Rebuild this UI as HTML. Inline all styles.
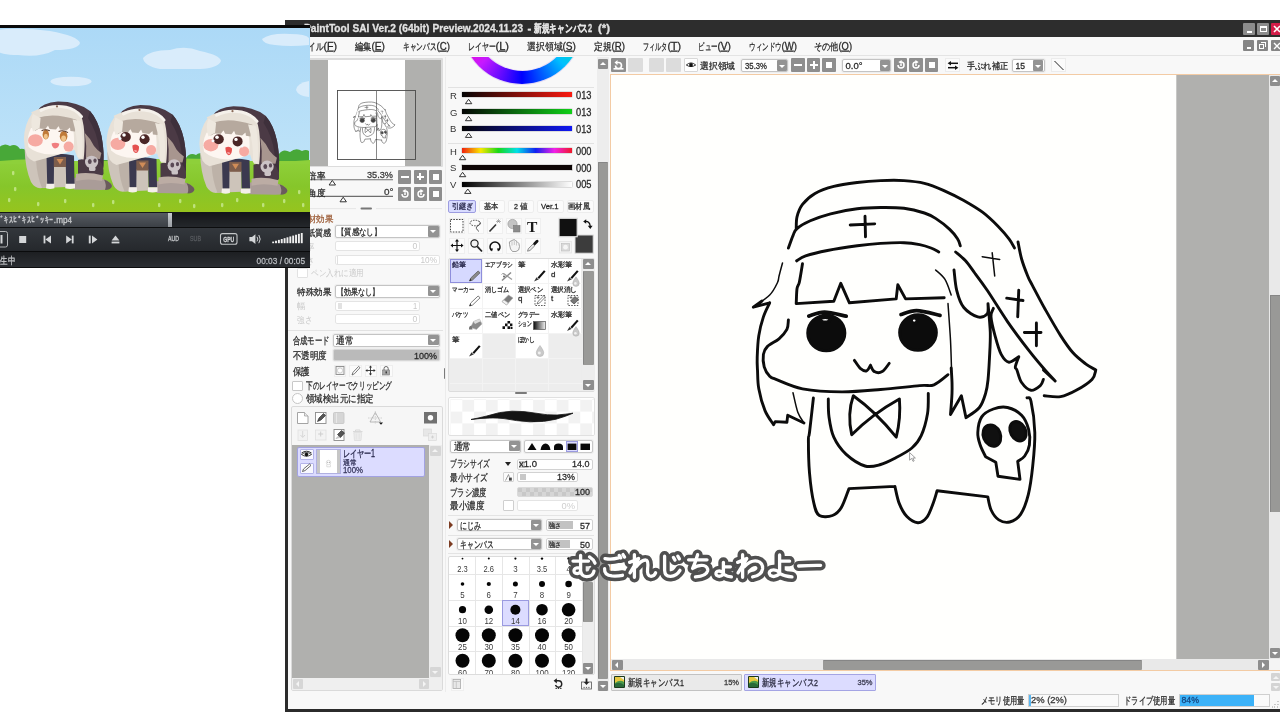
<!DOCTYPE html>
<html lang="ja">
<head>
<meta charset="utf-8">
<title>PaintTool SAI Ver.2</title>
<style>
*{box-sizing:border-box;margin:0;padding:0}
html,body{width:1280px;height:720px;overflow:hidden;background:#fff}
body{position:relative;font-family:"Liberation Sans",sans-serif;font-size:10px;color:#222;line-height:1}
.a{position:absolute}
svg{position:absolute;overflow:visible;will-change:transform}
svg text{font-family:"Liberation Sans",sans-serif}
.btn{position:absolute;background:#8e8e8e;border-radius:1px}
.btnl{position:absolute;background:#dcdcdc;border-radius:1px}
.combo{position:absolute;background:#fff;border:1px solid #c4c4c4;border-radius:2px;box-shadow:0 0 0 1px #eeeeee}
.dd{position:absolute;background:#939393;border-radius:1px}
.dd:after{content:"";position:absolute;left:50%;top:50%;margin:-1px 0 0 -3px;border:3px solid transparent;border-top:3px solid #fff;border-bottom:0}
.fld{position:absolute;background:#fff;border:1px solid #d2d2d2;border-radius:2px}
.fldd{position:absolute;background:#fff;border:1px solid #e4e4e4;border-radius:2px}
.hl{position:absolute;height:1px;background:#e0e0e0}
.ib{position:absolute;background:#fbfbfb;border:1px solid #ececec;border-radius:1px}
#win{position:absolute;left:285px;top:20px;width:995px;height:692px;background:#f8f8f8;border-left:3px solid #2b2b2b;border-bottom:3px solid #2b2b2b}
#title{position:absolute;left:285px;top:20px;width:995px;height:17px;background:#2d2d2d}
</style>
</head>
<body>
<!-- ================= SAI WINDOW FRAME ================= -->
<div id="win"></div>
<div id="title">
<div class="a" style="left:958px;top:3px;width:12px;height:12px;background:#8c8c8c;border-radius:1px"><div class="a" style="left:4px;top:8px;width:5px;height:2px;background:#fff"></div></div>
<div class="a" style="left:972px;top:3px;width:12px;height:12px;background:#8c8c8c;border-radius:1px"><div class="a" style="left:3px;top:3px;width:7px;height:6px;border:1px solid #fff;border-top:2px solid #fff"></div></div>
<div class="a" style="left:986px;top:3px;width:12px;height:12px;background:#d21c48;border-radius:1px"><svg style="left:2px;top:2px" width="8" height="8" viewBox="0 0 8 8"><path d="M1 1L7 7M7 1L1 7" stroke="#fff" stroke-width="1.6"/></svg></div>
</div>
<div class="a" style="left:288px;top:37px;width:992px;height:18px;background:#f8f8f8;"></div>
<div class="a" style="left:288px;top:55px;width:992px;height:1px;background:#e4e4e4;"></div>
<div class="a" style="left:1243px;top:40px;width:11px;height:11px;background:#858585;border-radius:1px"><div class="a" style="left:4px;top:7px;width:4px;height:2px;background:#fff"></div></div>
<div class="a" style="left:1257px;top:40px;width:11px;height:11px;background:#858585;border-radius:1px"><div class="a" style="left:2px;top:4px;width:5px;height:5px;border:1px solid #fff"></div><div class="a" style="left:4px;top:2px;width:5px;height:5px;border:1px solid #fff;border-left:0;border-bottom:0"></div></div>
<div class="a" style="left:1271px;top:40px;width:11px;height:11px;background:#858585;border-radius:1px"><svg style="left:2px;top:2px" width="8" height="8" viewBox="0 0 8 8"><path d="M1 1L7 7M7 1L1 7" stroke="#fff" stroke-width="1.4"/></svg></div>
<!-- ================= CANVAS AREA ================= -->
<div class="a" style="left:597px;top:58px;width:11px;height:10px;background:#8e8e8e;border-radius:1px"><div class="a" style="left:2px;top:3px;border:3px solid transparent;border-bottom:3px solid #fff;border-top:0"></div></div>
<div class="a" style="left:611px;top:58px;width:15px;height:14px;background:#8e8e8e;border-radius:1px"><svg style="left:2px;top:2px" width="11" height="10" viewBox="0 0 11 10"><path d="M2.5 5.5A3 3 0 1 0 5.5 2.5L3 2.5" fill="none" stroke="#fff" stroke-width="1.6"/><path d="M4.5 0L1.5 2.6L4.5 5.2Z" fill="#fff"/><rect x="0.5" y="8" width="10" height="1.6" fill="#fff"/></svg></div>
<div class="a" style="left:628px;top:58px;width:15px;height:14px;background:#dcdcdc;border-radius:1px"></div>
<div class="a" style="left:649px;top:58px;width:15px;height:14px;background:#dcdcdc;border-radius:1px"></div>
<div class="a" style="left:665.5px;top:58px;width:15px;height:14px;background:#dcdcdc;border-radius:1px"></div>
<div class="a" style="left:684px;top:58px;width:14px;height:14px;background:#fff;border:1px solid #d8d8d8;border-radius:1px"><svg style="left:1px;top:3px" width="10" height="6" viewBox="0 0 10 6"><path d="M0.3 3Q5 -1.2 9.7 3Q5 6.2 0.3 3Z" fill="#fff" stroke="#222" stroke-width="0.9"/><circle cx="5" cy="3" r="1.9" fill="#111"/></svg></div>
<div class="combo" style="left:741px;top:59px;width:47px;height:13px;"></div>
<div class="dd" style="left:777px;top:60px;width:10px;height:11px;"></div>
<div class="a" style="left:791px;top:58px;width:13.5px;height:14px;background:#8e8e8e;border-radius:1px"><div class="a" style="left:3px;top:6px;width:8px;height:2px;background:#fff"></div></div>
<div class="a" style="left:806.5px;top:58px;width:13.5px;height:14px;background:#8e8e8e;border-radius:1px"><div class="a" style="left:3px;top:6px;width:8px;height:2px;background:#fff"></div><div class="a" style="left:6px;top:3px;width:2px;height:8px;background:#fff"></div></div>
<div class="a" style="left:822px;top:58px;width:13.5px;height:14px;background:#8e8e8e;border-radius:1px"><div class="a" style="left:4px;top:4px;width:6px;height:6px;background:#fff"></div></div>
<div class="combo" style="left:842px;top:59px;width:49px;height:13px;"></div>
<div class="dd" style="left:880px;top:60px;width:10px;height:11px;"></div>
<div class="a" style="left:893.5px;top:58px;width:13.5px;height:14px;background:#8e8e8e;border-radius:1px"><svg style="left:2px;top:2px" width="10" height="10" viewBox="0 0 10 10"><path d="M2 5A3 3 0 1 0 5 2" fill="none" stroke="#fff" stroke-width="1.5"/><path d="M5.6 0L2.4 2L5.6 4.2Z" fill="#fff"/><circle cx="5" cy="5" r="1" fill="#fff"/></svg></div>
<div class="a" style="left:909px;top:58px;width:13.5px;height:14px;background:#8e8e8e;border-radius:1px"><svg style="left:2px;top:2px" width="10" height="10" viewBox="0 0 10 10"><path d="M8 5A3 3 0 1 1 5 2" fill="none" stroke="#fff" stroke-width="1.5"/><path d="M4.4 0L7.6 2L4.4 4.2Z" fill="#fff"/><circle cx="5" cy="5" r="1" fill="#fff"/></svg></div>
<div class="a" style="left:924.5px;top:58px;width:13.5px;height:14px;background:#8e8e8e;border-radius:1px"><div class="a" style="left:4px;top:4px;width:6px;height:6px;background:#fff"></div></div>
<div class="a" style="left:945px;top:58px;width:15px;height:14px;background:#fbfbfb;border:1px solid #ececec"><svg style="left:1px;top:2px" width="12" height="9" viewBox="0 0 12 9"><path d="M3.5 2.3H11" stroke="#111" stroke-width="1.5"/><path d="M4 0L0.6 2.3L4 4.6Z" fill="#111"/><path d="M1 6.7H8.5" stroke="#111" stroke-width="1.5"/><path d="M8 4.4L11.4 6.7L8 9Z" fill="#111"/></svg></div>
<div class="combo" style="left:1012px;top:59px;width:33px;height:13px;"></div>
<div class="dd" style="left:1033px;top:60px;width:10px;height:11px;"></div>
<div class="a" style="left:1051px;top:58px;width:15px;height:14px;background:#fbfbfb;border:1px solid #ececec"><svg style="left:1px;top:1px" width="12" height="11" viewBox="0 0 12 11"><path d="M1.5 1L10.5 10" stroke="#222" stroke-width="1"/></svg></div>
<div class="a" style="left:610px;top:74px;width:670px;height:597px;background:#f3cba4;"></div>
<div class="a" style="left:611px;top:75px;width:669px;height:595px;background:#fffffd;"></div>
<div class="a" style="left:1177px;top:75px;width:92px;height:584px;background:#b0b0ae;"></div>
<div class="a" style="left:1176px;top:75px;width:1px;height:584px;background:#c8c8c6;"></div>
<div class="a" style="left:1269px;top:75px;width:11px;height:584px;background:#e9e9e9;"></div>
<div class="a" style="left:1270px;top:76px;width:10px;height:10px;background:#8e8e8e;border-radius:1px"><div class="a" style="left:2px;top:3px;border:3px solid transparent;border-bottom:3px solid #fff;border-top:0"></div></div>
<div class="a" style="left:1270px;top:295px;width:10px;height:217px;background:#999997;border-left:1px solid #868686;border-top:1px solid #868686"></div>
<div class="a" style="left:1270px;top:648px;width:10px;height:10px;background:#8e8e8e;border-radius:1px"><div class="a" style="left:2px;top:4px;border:3px solid transparent;border-top:3px solid #fff;border-bottom:0"></div></div>
<div class="a" style="left:611px;top:659px;width:669px;height:11px;background:#e9e9e9;"></div>
<div class="a" style="left:1269px;top:659px;width:11px;height:11px;background:#f4f4f4;"></div>
<div class="a" style="left:612px;top:660px;width:11px;height:10px;background:#8e8e8e;border-radius:1px"><div class="a" style="left:3px;top:2px;border:3px solid transparent;border-right:3px solid #fff;border-left:0"></div></div>
<div class="a" style="left:822.5px;top:660px;width:319.5px;height:10px;background:#999997;border-radius:1px;border-top:1px solid #868686"></div>
<div class="a" style="left:1258px;top:660px;width:11px;height:10px;background:#8e8e8e;border-radius:1px"><div class="a" style="left:4px;top:2px;border:3px solid transparent;border-left:3px solid #fff;border-right:0"></div></div>
<div class="a" style="left:610.5px;top:673.5px;width:131.5px;height:17px;background:#eaeaea;border:1px solid #c2c2c2;border-radius:1px"></div>
<div class="a" style="left:744px;top:673.5px;width:131.5px;height:17px;background:#dcdcff;border:1px solid #a4a4e4;border-radius:1px"></div>
<svg style="left:614px;top:676px" width="11" height="12" viewBox="0 0 11 12"><rect x="0" y="0" width="11" height="12" rx="1" fill="#1c3a1c"/><rect x="1" y="1" width="9" height="10" fill="#4a9a4a"/><path d="M1 1H10V6Q6 3 1 7Z" fill="#e8c840"/><path d="M1 8Q5 5 10 9V11H1Z" fill="#2a6a3a"/><path d="M6 1H10V4Z" fill="#f0f0f0"/></svg>
<svg style="left:748px;top:676px" width="11" height="12" viewBox="0 0 11 12"><rect x="0" y="0" width="11" height="12" rx="1" fill="#1c3a1c"/><rect x="1" y="1" width="9" height="10" fill="#4a9a4a"/><path d="M1 1H10V6Q6 3 1 7Z" fill="#e8c840"/><path d="M1 8Q5 5 10 9V11H1Z" fill="#2a6a3a"/><path d="M6 1H10V4Z" fill="#f0f0f0"/></svg>
<div class="a" style="left:1271px;top:673px;width:9px;height:8px;background:#d4d4d4;border-radius:1px"><div class="a" style="left:2px;top:3px;border:3px solid transparent;border-bottom:3px solid #f4f4f4;border-top:0"></div></div>
<div class="a" style="left:1271px;top:683px;width:9px;height:8px;background:#d4d4d4;border-radius:1px"><div class="a" style="left:2px;top:3px;border:3px solid transparent;border-top:3px solid #f4f4f4;border-bottom:0"></div></div>
<div class="a" style="left:1027.5px;top:693.5px;width:91px;height:13px;background:#fafafa;border:1px solid #cfcfcf"></div>
<div class="a" style="left:1028.5px;top:694.5px;width:2px;height:11px;background:#58b8f4;"></div>
<div class="a" style="left:1179px;top:693.5px;width:90.5px;height:13px;background:#fafafa;border:1px solid #cfcfcf"></div>
<div class="a" style="left:1180px;top:694.5px;width:74px;height:11px;background:#3cb2f8;"></div>
<svg style="left:1271px;top:700px" width="8" height="8" viewBox="0 0 8 8"><path d="M7 1v1M7 4v1M4 4v1M7 7h-1M4 7h-1M1 7h1" stroke="#9a9a9a" stroke-width="1"/></svg>
<svg style="left:0px;top:0px" width="1280" height="720">
<text x="304" y="32" font-size="10.5" fill="#e4e4e4" font-weight="bold" stroke="#e4e4e4" stroke-width="0.28"><tspan x="304" textLength="125.4" lengthAdjust="spacingAndGlyphs">PaintTool SAI Ver.2 (64bit)</tspan> <tspan x="432.5" textLength="90.6" lengthAdjust="spacingAndGlyphs">Preview.2024.11.23</tspan> <tspan x="527.6" textLength="3.8" lengthAdjust="spacingAndGlyphs">-</tspan> <tspan x="534" textLength="58" lengthAdjust="spacingAndGlyphs">新規キャンバス2</tspan> <tspan x="598" textLength="12" lengthAdjust="spacingAndGlyphs">(*)</tspan></text>
<text x="293" y="49.7" font-size="10" fill="#2a2a2a" stroke="#2a2a2a" stroke-width="0.28"><tspan x="293" textLength="30.5" lengthAdjust="spacingAndGlyphs">ファイル</tspan><tspan x="323.5" textLength="13.5" lengthAdjust="spacingAndGlyphs">(<tspan text-decoration="underline">F</tspan>)</tspan></text>
<text x="355" y="49.7" font-size="10" fill="#2a2a2a" stroke="#2a2a2a" stroke-width="0.28"><tspan x="355" textLength="16.5" lengthAdjust="spacingAndGlyphs">編集</tspan><tspan x="371.5" textLength="13.5" lengthAdjust="spacingAndGlyphs">(<tspan text-decoration="underline">E</tspan>)</tspan></text>
<text x="403" y="49.7" font-size="10" fill="#2a2a2a" stroke="#2a2a2a" stroke-width="0.28"><tspan x="403" textLength="33.5" lengthAdjust="spacingAndGlyphs">キャンバス</tspan><tspan x="436.5" textLength="13.5" lengthAdjust="spacingAndGlyphs">(<tspan text-decoration="underline">C</tspan>)</tspan></text>
<text x="468" y="49.7" font-size="10" fill="#2a2a2a" stroke="#2a2a2a" stroke-width="0.28"><tspan x="468" textLength="27.5" lengthAdjust="spacingAndGlyphs">レイヤー</tspan><tspan x="495.5" textLength="13.5" lengthAdjust="spacingAndGlyphs">(<tspan text-decoration="underline">L</tspan>)</tspan></text>
<text x="527" y="49.7" font-size="10" fill="#2a2a2a" stroke="#2a2a2a" stroke-width="0.28"><tspan x="527" textLength="35.5" lengthAdjust="spacingAndGlyphs">選択領域</tspan><tspan x="562.5" textLength="13.5" lengthAdjust="spacingAndGlyphs">(<tspan text-decoration="underline">S</tspan>)</tspan></text>
<text x="594" y="49.7" font-size="10" fill="#2a2a2a" stroke="#2a2a2a" stroke-width="0.28"><tspan x="594" textLength="17.5" lengthAdjust="spacingAndGlyphs">定規</tspan><tspan x="611.5" textLength="13.5" lengthAdjust="spacingAndGlyphs">(<tspan text-decoration="underline">R</tspan>)</tspan></text>
<text x="643" y="49.7" font-size="10" fill="#2a2a2a" stroke="#2a2a2a" stroke-width="0.28"><tspan x="643" textLength="24.5" lengthAdjust="spacingAndGlyphs">フィルタ</tspan><tspan x="667.5" textLength="13.5" lengthAdjust="spacingAndGlyphs">(<tspan text-decoration="underline">T</tspan>)</tspan></text>
<text x="698" y="49.7" font-size="10" fill="#2a2a2a" stroke="#2a2a2a" stroke-width="0.28"><tspan x="698" textLength="19.5" lengthAdjust="spacingAndGlyphs">ビュー</tspan><tspan x="717.5" textLength="13.5" lengthAdjust="spacingAndGlyphs">(<tspan text-decoration="underline">V</tspan>)</tspan></text>
<text x="749" y="49.7" font-size="10" fill="#2a2a2a" stroke="#2a2a2a" stroke-width="0.28"><tspan x="749" textLength="32.5" lengthAdjust="spacingAndGlyphs">ウィンドウ</tspan><tspan x="781.5" textLength="15.5" lengthAdjust="spacingAndGlyphs">(<tspan text-decoration="underline">W</tspan>)</tspan></text>
<text x="814" y="49.7" font-size="10" fill="#2a2a2a" stroke="#2a2a2a" stroke-width="0.28"><tspan x="814" textLength="24.5" lengthAdjust="spacingAndGlyphs">その他</tspan><tspan x="838.5" textLength="13.5" lengthAdjust="spacingAndGlyphs">(<tspan text-decoration="underline">O</tspan>)</tspan></text>
<text x="700" y="68.6" font-size="9" fill="#2a2a2a" textLength="35" lengthAdjust="spacingAndGlyphs" stroke="#2a2a2a" stroke-width="0.28">選択領域</text>
<text x="745" y="68.8" font-size="9.5" fill="#2a2a2a" textLength="22" lengthAdjust="spacingAndGlyphs" stroke="#2a2a2a" stroke-width="0.28">35.3%</text>
<text x="845.5" y="68.8" font-size="9.5" fill="#2a2a2a" textLength="17" lengthAdjust="spacingAndGlyphs" stroke="#2a2a2a" stroke-width="0.28">0.0°</text>
<text x="967" y="68.6" font-size="9" fill="#2a2a2a" textLength="41" lengthAdjust="spacingAndGlyphs" stroke="#2a2a2a" stroke-width="0.28">手ぶれ補正</text>
<text x="1015.5" y="68.8" font-size="9.5" fill="#2a2a2a" textLength="9.5" lengthAdjust="spacingAndGlyphs" stroke="#2a2a2a" stroke-width="0.28">15</text>
<text x="628" y="685.6" font-size="9.5" fill="#2a2a2a" textLength="56" lengthAdjust="spacingAndGlyphs" stroke="#2a2a2a" stroke-width="0.28">新規キャンバス1</text>
<text x="724" y="685" font-size="8" fill="#3a3a3a" textLength="15" lengthAdjust="spacingAndGlyphs" stroke="#3a3a3a" stroke-width="0.28">15%</text>
<text x="762" y="685.6" font-size="9.5" fill="#2a2a40" textLength="56" lengthAdjust="spacingAndGlyphs" stroke="#2a2a40" stroke-width="0.28">新規キャンバス2</text>
<text x="857.5" y="685" font-size="8" fill="#3a3a50" textLength="15" lengthAdjust="spacingAndGlyphs" stroke="#3a3a50" stroke-width="0.28">35%</text>
<text x="981" y="703.6" font-size="9.5" fill="#2a2a2a" textLength="43" lengthAdjust="spacingAndGlyphs" stroke="#2a2a2a" stroke-width="0.28">メモリ使用量</text>
<text x="1031" y="703.4" font-size="9" fill="#3a3a3a" textLength="36" lengthAdjust="spacingAndGlyphs" stroke="#3a3a3a" stroke-width="0.28">2% (2%)</text>
<text x="1124" y="703.6" font-size="9.5" fill="#2a2a2a" textLength="51" lengthAdjust="spacingAndGlyphs" stroke="#2a2a2a" stroke-width="0.28">ドライブ使用量</text>
<text x="1181.5" y="703.4" font-size="9" fill="#15457f" textLength="17.5" lengthAdjust="spacingAndGlyphs" stroke="#15457f" stroke-width="0.28">84%</text>
</svg>
<!-- ================= LEFT PANEL ================= -->
<div class="a" style="left:308px;top:58px;width:135px;height:109px;background:#dcdcdc;border-radius:1px"></div>
<div class="a" style="left:310px;top:59.5px;width:131px;height:106.5px;background:#b0b0ae;"></div>
<div class="a" style="left:328px;top:59.5px;width:76.5px;height:106.5px;background:#fff;"></div>
<svg style="left:0;top:0" width="1280" height="720">
<rect x="337.5" y="90.5" width="78" height="69" fill="none" stroke="#4a4a4a" stroke-width="0.9"/>
<path d="M376.5 90.5V159.5" stroke="#6a6a6a" stroke-width="0.8"/>
<g transform="translate(262.7 80.3) scale(0.1204)" opacity="0.78"><use href="#chibi" stroke="#222" stroke-width="5" style="font-size:5px"/></g>
<path d="M288 179.7H393" stroke="#6e6e6e" stroke-width="1.1"/><path d="M288 196.4H393" stroke="#6e6e6e" stroke-width="1.1"/>
<path d="M332.3 180.4L335.5 185.0H329.1Z" fill="#fff" stroke="#333" stroke-width="1"/><path d="M343.2 197.2L346.4 201.79999999999998H340.0Z" fill="#fff" stroke="#333" stroke-width="1"/>
<rect x="360.5" y="207.6" width="11.5" height="2" rx="1" fill="#777"/>
<path d="M288 208.6H356M376 208.6H442" stroke="#e6e6e6" stroke-width="1"/>
</svg>
<div class="a" style="left:398px;top:170.3px;width:13.4px;height:13.4px;background:#8e8e8e;border-radius:1px"><div class="a" style="left:3px;top:5.5px;width:7.5px;height:2px;background:#fff"></div></div>
<div class="a" style="left:413.5px;top:170.3px;width:13.4px;height:13.4px;background:#8e8e8e;border-radius:1px"><div class="a" style="left:3px;top:5.5px;width:7.5px;height:2px;background:#fff"></div><div class="a" style="left:5.8px;top:2.7px;width:2px;height:7.5px;background:#fff"></div></div>
<div class="a" style="left:429px;top:170.3px;width:13.4px;height:13.4px;background:#8e8e8e;border-radius:1px"><div class="a" style="left:4px;top:4px;width:5.5px;height:5.5px;background:#fff"></div></div>
<div class="a" style="left:398px;top:187.2px;width:13.4px;height:13.4px;background:#8e8e8e;border-radius:1px"><svg style="left:2px;top:2px" width="10" height="10" viewBox="0 0 10 10"><path d="M2 5A3 3 0 1 0 5 2" fill="none" stroke="#fff" stroke-width="1.4"/><path d="M5.6 0L2.4 2L5.6 4.2Z" fill="#fff"/><circle cx="5" cy="5" r="1" fill="#fff"/></svg></div>
<div class="a" style="left:413.5px;top:187.2px;width:13.4px;height:13.4px;background:#8e8e8e;border-radius:1px"><svg style="left:2px;top:2px" width="10" height="10" viewBox="0 0 10 10"><path d="M8 5A3 3 0 1 1 5 2" fill="none" stroke="#fff" stroke-width="1.4"/><path d="M4.4 0L7.6 2L4.4 4.2Z" fill="#fff"/><circle cx="5" cy="5" r="1" fill="#fff"/></svg></div>
<div class="a" style="left:429px;top:187.2px;width:13.4px;height:13.4px;background:#8e8e8e;border-radius:1px"><div class="a" style="left:4px;top:4px;width:5.5px;height:5.5px;background:#fff"></div></div>
<div class="combo" style="left:335px;top:225px;width:104.5px;height:13px;"></div>
<div class="dd" style="left:428px;top:226.2px;width:10.6px;height:10.6px;"></div>
<div class="fldd" style="left:335px;top:241px;width:85px;height:10px;"></div>
<div class="fldd" style="left:335px;top:255px;width:104.5px;height:10px;"><div class="a" style="left:1px;top:0;width:1px;height:8px;background:#e0e0e0"></div></div>
<div class="a" style="left:297px;top:268px;width:10.5px;height:9.5px;background:#fff;border:1px solid #e2e2e2;border-radius:1px"></div>
<div class="combo" style="left:335px;top:284.5px;width:104.5px;height:13px;"></div>
<div class="dd" style="left:428px;top:285.7px;width:10.6px;height:10.6px;"></div>
<div class="fldd" style="left:335px;top:300.6px;width:85px;height:10px;"><div class="a" style="left:2px;top:1px;width:4px;height:6px;background:#e2e2e2"></div></div>
<div class="fldd" style="left:335px;top:313.8px;width:85px;height:10px;"></div>
<div class="a" style="left:288px;top:330px;width:155px;height:1px;background:#e2e2e2;"></div>
<div class="combo" style="left:332.5px;top:333.5px;width:107.5px;height:13px;"></div>
<div class="dd" style="left:428px;top:334.7px;width:10.6px;height:10.6px;"></div>
<div class="a" style="left:332.5px;top:349.4px;width:107.5px;height:12px;background:#bababa;border:1px solid #d6d6d6;border-radius:2px;box-shadow:0 0 0 1px #eee"></div>
<div class="a" style="left:333.5px;top:364.5px;width:12.5px;height:12.5px;background:#fbfbfb;border:1px solid #eeeeee"></div>
<div class="a" style="left:349.0px;top:364.5px;width:12.5px;height:12.5px;background:#fbfbfb;border:1px solid #eeeeee"></div>
<div class="a" style="left:364.5px;top:364.5px;width:12.5px;height:12.5px;background:#fbfbfb;border:1px solid #eeeeee"></div>
<div class="a" style="left:380.0px;top:364.5px;width:12.5px;height:12.5px;background:#fbfbfb;border:1px solid #eeeeee"></div>
<svg style="left:0;top:0" width="1280" height="720">
<rect x="336" y="366.5" width="8" height="8" fill="#f2f2f2" stroke="#8a8a8a" stroke-width="0.9"/><circle cx="340" cy="370.5" r="2.6" fill="#fff" stroke="#c4c4c4" stroke-width="0.8"/>
<path d="M352 375L353 372.3L358.6 366.4L360 367.7L354.4 373.8Z" fill="#fff" stroke="#555" stroke-width="0.8"/>
<path d="M370.5 366.5V374.5M366.5 370.5H374.5" stroke="#333" stroke-width="0.9"/><path d="M370.5 365.4l1.6 2h-3.2zM370.5 375.6l1.6-2h-3.2zM365.4 370.5l2-1.6v3.2zM375.6 370.5l-2-1.6v3.2z" fill="#333"/>
<rect x="382.6" y="370" width="7" height="5" fill="#a8a8a8" stroke="#777" stroke-width="0.6"/><path d="M384 370V368.6A2.1 2.1 0 0 1 388.2 368.6V370" fill="none" stroke="#666" stroke-width="1"/><rect x="385.6" y="371.4" width="1.2" height="2" fill="#222"/>
</svg>
<div class="a" style="left:292px;top:380.6px;width:10.5px;height:10.5px;background:#fff;border:1px solid #c8c8c8;border-radius:1px"></div>
<div class="a" style="left:292px;top:393px;width:11px;height:11px;background:#fff;border:1px solid #c4c4c4;border-radius:50%"></div>
<div class="a" style="left:444px;top:368px;width:2px;height:11px;background:#7a7a7a;border-radius:1px"></div>
<div class="a" style="left:290.5px;top:406px;width:152px;height:285px;background:#f6f6f6;border:1px solid #dadada;border-radius:2px"></div>
<svg style="left:0;top:0" width="1280" height="720">
<path d="M297.5 412.5H304.5L308 416V423.5H297.5Z" fill="#fff" stroke="#9a9a9a" stroke-width="0.9"/><path d="M304.5 412.5V416H308" fill="#e8e8e8" stroke="#9a9a9a" stroke-width="0.7"/>
<rect x="315.5" y="412.5" width="10.5" height="11" fill="#fff" stroke="#8a8a8a" stroke-width="0.9"/><path d="M317.5 421.5L319 418L323.5 413.5L325.5 415.5L321 420Z" fill="#555" stroke="#222" stroke-width="0.6"/>
<rect x="333.5" y="412.5" width="10.5" height="11" rx="1" fill="#d6d6d6" stroke="#c4c4c4" stroke-width="0.8"/><path d="M336.5 413V423" stroke="#e8e8e8" stroke-width="1"/>
<path d="M375.3 412.5L370 422H380.6Z" fill="#f4f4f4" stroke="#a8a8a8" stroke-width="0.8"/><path d="M368 418H382.5M375.3 411V424" stroke="#b8b8b8" stroke-width="0.6" stroke-dasharray="1.5 1"/><path d="M379 422.5H383L381 424.8Z" fill="#111"/>
<rect x="424" y="412" width="13" height="11.5" fill="#717171"/><circle cx="430.5" cy="417.8" r="2.7" fill="#fff"/>
<g opacity="0.55"><rect x="298" y="430" width="9.5" height="10.5" fill="#efefef" stroke="#cfcfcf" stroke-width="0.8"/><path d="M302.7 431V437M300.5 435L302.7 437.5L305 435" fill="none" stroke="#bdbdbd" stroke-width="1"/></g>
<g opacity="0.6"><rect x="315.5" y="430" width="10.5" height="10" fill="#f2f2f2" stroke="#d2d2d2" stroke-width="0.8"/><path d="M320.7 431.5V436.5M318.2 434H323.2" stroke="#b4b4b4" stroke-width="1"/></g>
<rect x="334" y="429.5" width="10" height="11" fill="#fff" stroke="#8a8a8a" stroke-width="0.9"/><path d="M337.5 434.5L341.5 430.5L344.5 433L340.5 437.5Z" fill="#555" stroke="#222" stroke-width="0.6"/><path d="M336 438.5L338.5 436L340 437.5Z" fill="#ddd" stroke="#888" stroke-width="0.4"/>
<g opacity="0.6"><path d="M353 431.5H362.5M355.5 431V430H360V431" stroke="#c0c0c0" stroke-width="0.9" fill="none"/><path d="M353.8 432.5H361.7L361 440.5H354.5Z" fill="#e6e6e6" stroke="#cacaca" stroke-width="0.7"/><path d="M356.3 433.5V439.5M359.2 433.5V439.5" stroke="#d4d4d4" stroke-width="0.7"/></g>
<g opacity="0.7"><rect x="423.5" y="429" width="8" height="7" fill="#e2e2e2" stroke="#cfcfcf" stroke-width="0.7"/><rect x="428.5" y="433.5" width="8" height="7" fill="#ececec" stroke="#cfcfcf" stroke-width="0.7"/><path d="M432.5 435.5V438.5M431 437H434" stroke="#bcbcbc" stroke-width="0.8"/></g>
</svg>
<div class="a" style="left:292px;top:445px;width:137px;height:232.5px;background:#b0b0ae;"></div>
<div class="a" style="left:429px;top:445px;width:12.5px;height:232.5px;background:#ededed;"></div>
<div class="a" style="left:430px;top:445.5px;width:10.5px;height:10px;background:#d6d6d6;border-radius:1px"><div class="a" style="left:2.2px;top:3px;border:3px solid transparent;border-bottom:3px solid #f4f4f4;border-top:0"></div></div>
<div class="a" style="left:430px;top:667px;width:10.5px;height:10px;background:#d6d6d6;border-radius:1px"><div class="a" style="left:2.2px;top:4px;border:3px solid transparent;border-top:3px solid #f4f4f4;border-bottom:0"></div></div>
<div class="a" style="left:292px;top:678px;width:149.5px;height:12px;background:#efefef;"></div>
<div class="a" style="left:292.5px;top:679px;width:10px;height:10px;background:#d6d6d6;border-radius:1px"><div class="a" style="left:3px;top:2px;border:3px solid transparent;border-right:3px solid #f4f4f4;border-left:0"></div></div>
<div class="a" style="left:418.5px;top:679px;width:10px;height:10px;background:#d6d6d6;border-radius:1px"><div class="a" style="left:4px;top:2px;border:3px solid transparent;border-left:3px solid #f4f4f4;border-right:0"></div></div>
<div class="a" style="left:296.5px;top:446.5px;width:128px;height:30px;background:#dcdcff;border:1px solid #a2a2e2;border-radius:2px"></div>
<div class="a" style="left:299.5px;top:449px;width:14px;height:11px;background:#f8f8ff;border:1px solid #b4b4ea;border-radius:1px"></div>
<div class="a" style="left:299.5px;top:462.5px;width:14px;height:11px;background:#f8f8ff;border:1px solid #b4b4ea;border-radius:1px"></div>
<div class="a" style="left:316px;top:449px;width:24.5px;height:24.5px;background:#c6c6c6;border:1px solid #b0b0e0"></div>
<div class="a" style="left:319.5px;top:450px;width:17px;height:22.5px;background:#fff;"></div>
<svg style="left:0;top:0" width="1280" height="720">
<path d="M301.5 454.5Q306.5 450.5 311.5 454.5Q306.5 458 301.5 454.5Z" fill="#fff" stroke="#222" stroke-width="0.8"/><circle cx="306.5" cy="454.6" r="1.8" fill="#111"/><path d="M301.5 453Q306.5 449.5 311.5 453" fill="none" stroke="#222" stroke-width="0.9"/>
<path d="M302.5 471.5L303.5 469L309.6 464L311 465.4L305 470.6Z" fill="#fff" stroke="#444" stroke-width="0.8"/>
<g fill="none" stroke="#c8c8c8" stroke-width="0.6"><circle cx="328.5" cy="462.5" r="2.2"/><path d="M326.8 464.5V466.8H330.4V464.5"/></g><circle cx="327.7" cy="462.3" r="0.6" fill="#aaa"/><circle cx="329.5" cy="462.3" r="0.6" fill="#aaa"/>
</svg>
<svg style="left:0px;top:0px" width="1280" height="720">
<text x="291" y="178.8" font-size="9" fill="#2a2a2a" textLength="34" lengthAdjust="spacingAndGlyphs" stroke="#2a2a2a" stroke-width="0.28">表示倍率</text>
<text x="367" y="178.4" font-size="9.5" fill="#3a3a3a" textLength="26" lengthAdjust="spacingAndGlyphs" stroke="#3a3a3a" stroke-width="0.28">35.3%</text>
<text x="291" y="195.6" font-size="9" fill="#2a2a2a" textLength="34" lengthAdjust="spacingAndGlyphs" stroke="#2a2a2a" stroke-width="0.28">回転角度</text>
<text x="384" y="195.2" font-size="9.5" fill="#3a3a3a" textLength="9.5" lengthAdjust="spacingAndGlyphs" stroke="#3a3a3a" stroke-width="0.28">0°</text>
<text x="299" y="221.6" font-size="9" fill="#a0633f" textLength="34" lengthAdjust="spacingAndGlyphs" stroke="#a0633f" stroke-width="0.28">画材効果</text>
<text x="291" y="235.6" font-size="9" fill="#2a2a2a" textLength="40" lengthAdjust="spacingAndGlyphs" stroke="#2a2a2a" stroke-width="0.28">画用紙質感</text>
<text x="337" y="235.4" font-size="9" fill="#2a2a2a" textLength="44" lengthAdjust="spacingAndGlyphs" stroke="#2a2a2a" stroke-width="0.28">【質感なし】</text>
<text x="297" y="249.6" font-size="9" fill="#c9c9c9" textLength="17" lengthAdjust="spacingAndGlyphs">倍率</text>
<text x="412.5" y="249.4" font-size="9" fill="#c9c9c9" textLength="4.8" lengthAdjust="spacingAndGlyphs">0</text>
<text x="297" y="263.6" font-size="9" fill="#c9c9c9" textLength="17" lengthAdjust="spacingAndGlyphs">強さ</text>
<text x="420.5" y="263.4" font-size="9" fill="#c9c9c9" textLength="16.5" lengthAdjust="spacingAndGlyphs">10%</text>
<text x="311" y="275.9" font-size="9" fill="#c9c9c9" textLength="53" lengthAdjust="spacingAndGlyphs">ペン入れに適用</text>
<text x="297" y="294.8" font-size="9" fill="#2a2a2a" textLength="34" lengthAdjust="spacingAndGlyphs" stroke="#2a2a2a" stroke-width="0.28">特殊効果</text>
<text x="337" y="294.6" font-size="9" fill="#2a2a2a" textLength="42" lengthAdjust="spacingAndGlyphs" stroke="#2a2a2a" stroke-width="0.28">【効果なし】</text>
<text x="297" y="309.2" font-size="9" fill="#c9c9c9" textLength="8.5" lengthAdjust="spacingAndGlyphs">幅</text>
<text x="413" y="309" font-size="9" fill="#c9c9c9" textLength="4.2" lengthAdjust="spacingAndGlyphs">1</text>
<text x="297" y="322.6" font-size="9" fill="#c9c9c9" textLength="15" lengthAdjust="spacingAndGlyphs">強さ</text>
<text x="412.5" y="322.4" font-size="9" fill="#c9c9c9" textLength="4.8" lengthAdjust="spacingAndGlyphs">0</text>
<text x="292.5" y="344.2" font-size="9.5" fill="#2a2a2a" textLength="37" lengthAdjust="spacingAndGlyphs" stroke="#2a2a2a" stroke-width="0.28">合成モード</text>
<text x="336" y="344.2" font-size="9.5" fill="#2a2a2a" textLength="17.5" lengthAdjust="spacingAndGlyphs" stroke="#2a2a2a" stroke-width="0.28">通常</text>
<text x="292.5" y="359.2" font-size="9.5" fill="#2a2a2a" textLength="34" lengthAdjust="spacingAndGlyphs" stroke="#2a2a2a" stroke-width="0.28">不透明度</text>
<text x="414" y="359" font-size="9.5" fill="#2a2a2a" textLength="23" lengthAdjust="spacingAndGlyphs" stroke="#2a2a2a" stroke-width="0.28">100%</text>
<text x="292.5" y="375.2" font-size="9.5" fill="#2a2a2a" textLength="17" lengthAdjust="spacingAndGlyphs" stroke="#2a2a2a" stroke-width="0.28">保護</text>
<text x="306" y="388.9" font-size="9.5" fill="#2a2a2a" textLength="86" lengthAdjust="spacingAndGlyphs" stroke="#2a2a2a" stroke-width="0.28">下のレイヤーでクリッピング</text>
<text x="306" y="402.3" font-size="9.5" fill="#2a2a2a" textLength="67.5" lengthAdjust="spacingAndGlyphs" stroke="#2a2a2a" stroke-width="0.28">領域検出元に指定</text>
<text x="342.5" y="457.4" font-size="10" fill="#26264a" textLength="32.5" lengthAdjust="spacingAndGlyphs" stroke="#26264a" stroke-width="0.28">レイヤー1</text>
<text x="343" y="465" font-size="7" fill="#3a3a60" textLength="14" lengthAdjust="spacingAndGlyphs" stroke="#3a3a60" stroke-width="0.28">通常</text>
<text x="343" y="473.2" font-size="8.5" fill="#3a3a60" textLength="20" lengthAdjust="spacingAndGlyphs" stroke="#3a3a60" stroke-width="0.28">100%</text>
</svg>
<!-- ================= MIDDLE PANEL ================= -->
<div class="a" style="left:445px;top:57px;width:1px;height:635px;background:#ececec;"></div>
<div class="a" style="left:447px;top:57px;width:148px;height:28px;overflow:hidden"><div class="a" style="left:14px;top:-95.5px;width:122px;height:122px;border-radius:50%;background:conic-gradient(from 0deg,hsl(60,100%,50%),hsl(120,100%,45%) 60deg,hsl(165,100%,45%) 105deg,hsl(195,100%,50%) 135deg,hsl(215,100%,50%) 155deg,hsl(240,100%,50%) 180deg,hsl(262,100%,52%) 202deg,hsl(285,100%,55%) 225deg,hsl(315,100%,50%) 255deg,hsl(360,100%,50%) 300deg,hsl(420,100%,50%) 360deg);box-shadow:0 0 0 1px #e4d8f4"></div><div class="a" style="left:27.5px;top:-82px;width:95px;height:95px;border-radius:50%;background:#f8f8f8;box-shadow:0 0 0 1px #eadcf6"></div></div>
<div class="a" style="left:448px;top:87px;width:146px;height:1px;background:#e2e2e2;"></div>
<div class="a" style="left:461px;top:91.2px;width:111.5px;height:7px;background:linear-gradient(90deg,#050505,#fa1a10);border:1px solid #dcdcdc;border-radius:1.5px"></div>
<div class="a" style="left:461px;top:108.2px;width:111.5px;height:7px;background:linear-gradient(90deg,#050505,#10d018);border:1px solid #dcdcdc;border-radius:1.5px"></div>
<div class="a" style="left:461px;top:124.9px;width:111.5px;height:7px;background:linear-gradient(90deg,#050505,#1018f4);border:1px solid #dcdcdc;border-radius:1.5px"></div>
<div class="a" style="left:448px;top:142.5px;width:146px;height:1px;background:#e2e2e2;"></div>
<div class="a" style="left:461px;top:147.2px;width:111.5px;height:7px;background:linear-gradient(90deg,#f02010,#f8e800 17%,#18d818 33%,#00e0e8 50%,#1020f0 67%,#f020e8 84%,#f01828);border:1px solid #dcdcdc;border-radius:1.5px"></div>
<div class="a" style="left:461px;top:164.2px;width:111.5px;height:7px;background:#0e0606;border:1px solid #dcdcdc;border-radius:1.5px"></div>
<div class="a" style="left:461px;top:180.89999999999998px;width:111.5px;height:7px;background:linear-gradient(90deg,#000,#fff);border:1px solid #dcdcdc;border-radius:1.5px"></div>
<svg style="left:0;top:0" width="1280" height="720"><path d="M468.6 99.3L471.8 103.7H465.40000000000003Z" fill="#fff" stroke="#333" stroke-width="1"/><path d="M468.6 116.3L471.8 120.7H465.40000000000003Z" fill="#fff" stroke="#333" stroke-width="1"/><path d="M468.6 133L471.8 137.4H465.40000000000003Z" fill="#fff" stroke="#333" stroke-width="1"/><path d="M462.6 155.3L465.8 159.70000000000002H459.40000000000003Z" fill="#fff" stroke="#333" stroke-width="1"/><path d="M462.6 172.3L465.8 176.70000000000002H459.40000000000003Z" fill="#fff" stroke="#333" stroke-width="1"/><path d="M467.8 189L471.0 193.4H464.6Z" fill="#fff" stroke="#333" stroke-width="1"/></svg>
<div class="a" style="left:447.7px;top:200.4px;width:28.3px;height:12.2px;background:#d9dcff;border:1px solid #9c9ce0;border-radius:2px"></div>
<div class="a" style="left:479px;top:200.4px;width:25.5px;height:12.2px;background:#fbfbfb;border:1px solid #ededed;border-radius:2px"></div>
<div class="a" style="left:507.5px;top:200.4px;width:26px;height:12.2px;background:#fbfbfb;border:1px solid #ededed;border-radius:2px"></div>
<div class="a" style="left:537px;top:200.4px;width:26.5px;height:12.2px;background:#fbfbfb;border:1px solid #ededed;border-radius:2px"></div>
<div class="a" style="left:566.5px;top:200.4px;width:27px;height:12.2px;background:#fbfbfb;border:1px solid #ededed;border-radius:2px"></div>
<div class="a" style="left:448.5px;top:217.5px;width:16.5px;height:16.5px;background:#fbfbfb;border:1px solid #efefef"></div>
<div class="a" style="left:467.5px;top:217.5px;width:16.5px;height:16.5px;background:#fbfbfb;border:1px solid #efefef"></div>
<div class="a" style="left:486.5px;top:217.5px;width:16.5px;height:16.5px;background:#fbfbfb;border:1px solid #efefef"></div>
<div class="a" style="left:505.5px;top:217.5px;width:16.5px;height:16.5px;background:#fbfbfb;border:1px solid #efefef"></div>
<div class="a" style="left:524.5px;top:217.5px;width:16.5px;height:16.5px;background:#fbfbfb;border:1px solid #efefef"></div>
<div class="a" style="left:448.5px;top:237.5px;width:16.5px;height:16.5px;background:#fbfbfb;border:1px solid #efefef"></div>
<div class="a" style="left:467.5px;top:237.5px;width:16.5px;height:16.5px;background:#fbfbfb;border:1px solid #efefef"></div>
<div class="a" style="left:486.5px;top:237.5px;width:16.5px;height:16.5px;background:#fbfbfb;border:1px solid #efefef"></div>
<div class="a" style="left:505.5px;top:237.5px;width:16.5px;height:16.5px;background:#fbfbfb;border:1px solid #efefef"></div>
<div class="a" style="left:524.5px;top:237.5px;width:16.5px;height:16.5px;background:#fbfbfb;border:1px solid #efefef"></div>
<svg style="left:0;top:0" width="1280" height="720">
<rect x="450.5" y="219.5" width="12.5" height="12.5" fill="#fff" stroke="#444" stroke-width="1" stroke-dasharray="1.6 1.2"/>
<ellipse cx="475" cy="223" rx="5" ry="2.8" fill="none" stroke="#444" stroke-width="1" stroke-dasharray="1.6 1.1"/><path d="M479.5 221.5Q482 224 477.5 226Q474.5 228 479 231.5" fill="none" stroke="#444" stroke-width="0.9"/>
<path d="M489.5 231.5L496 224.5" stroke="#333" stroke-width="1.6"/><path d="M498.5 219v3M496 221.5h5M496.8 219.8l3.4 3.4M500.2 219.8l-3.4 3.4" stroke="#888" stroke-width="0.6"/>
<circle cx="512.5" cy="224" r="4.6" fill="#c4c4c4" stroke="#9a9a9a" stroke-width="0.7"/><rect x="513.5" y="225.5" width="6.5" height="6.5" fill="#8c8c8c" stroke="#777" stroke-width="0.6"/>
</svg>
<svg style="left:0px;top:0px" width="1280" height="720">
<text x="527" y="232.2" font-size="15.5" font-weight="bold" fill="#1a1a1a" style="font-family:'Liberation Serif',serif">T</text></svg>
<svg style="left:0;top:0" width="1280" height="720">
<path d="M457 240.5V250.5M452 245.5H462" stroke="#111" stroke-width="1.2"/><path d="M457 239l2 2.5h-4zM457 252l2-2.5h-4zM450.5 245.5l2.5-2v4zM463.5 245.5l-2.5-2v4z" fill="#111"/>
<circle cx="474.5" cy="243.5" r="3.6" fill="#f4f4f4" stroke="#222" stroke-width="1.2"/><path d="M477.2 246.4L482 251.5" stroke="#222" stroke-width="1.8"/>
<path d="M491.5 250.5A5 5 0 1 1 498.5 250.5" fill="none" stroke="#111" stroke-width="1.5"/><path d="M489.6 248.2l3.4 0.4l-1 3zM500.4 248.2l-3.4 0.4l1 3z" fill="#111"/>
<path d="M509.5 244.5Q508.5 241 511 241L513 240Q514.5 239 515.5 240.5L517 241.5Q519.5 243 519.5 246.5Q519.5 251 516 251.5H512.5Q510 250 509.5 244.5Z" fill="#f4f4f4" stroke="#8a8a8a" stroke-width="0.8"/><path d="M512 241.5V245.5M514.3 240.5V245M516.5 241.5V245.5" stroke="#aaa" stroke-width="0.6"/>
<path d="M527.5 251.2L528.3 248.7L533 244L534.8 245.8L530 250.5Z" fill="#e4e4e4" stroke="#666" stroke-width="0.7"/><path d="M533 243.5L536 240.3Q537.6 239.4 538.3 240.4Q539 241.4 537.8 242.6L534.8 245.6Z" fill="#111"/>
<rect x="575" y="235" width="18.2" height="18.2" fill="#3c3c3c" stroke="#dcdcdc" stroke-width="1"/>
<rect x="559" y="218.3" width="18.2" height="18.4" fill="#111" stroke="#dedede" stroke-width="1.2"/>
<rect x="559.5" y="241.5" width="12" height="11.5" fill="#f4f4f4" stroke="#e4e4e4" stroke-width="0.8"/><rect x="561.5" y="243.5" width="8" height="7.5" fill="#dadada" stroke="#bcbcbc" stroke-width="0.6"/><circle cx="565.5" cy="247.2" r="2.4" fill="#f6f6f6"/>
<path d="M585 221.5Q589.5 221 590.2 226" fill="none" stroke="#111" stroke-width="1.3"/><path d="M583.2 221.6l3-2.4v4.6zM590.3 229l-2.5-3.2h4.8z" fill="#111"/>
</svg>
<div class="a" style="left:448px;top:257.5px;width:147px;height:134px;background:#ececec;border:1px solid #dcdcdc;border-radius:2px"></div>
<div class="a" style="left:449.5px;top:258.5px;width:32px;height:24px;background:#fff;"></div>
<div class="a" style="left:482.5px;top:258.5px;width:32px;height:24px;background:#fff;"></div>
<div class="a" style="left:515.5px;top:258.5px;width:32px;height:24px;background:#fff;"></div>
<div class="a" style="left:548.5px;top:258.5px;width:32px;height:24px;background:#fff;"></div>
<div class="a" style="left:449.5px;top:283.5px;width:32px;height:24px;background:#fff;"></div>
<div class="a" style="left:482.5px;top:283.5px;width:32px;height:24px;background:#fff;"></div>
<div class="a" style="left:515.5px;top:283.5px;width:32px;height:24px;background:#fff;"></div>
<div class="a" style="left:548.5px;top:283.5px;width:32px;height:24px;background:#fff;"></div>
<div class="a" style="left:449.5px;top:308.5px;width:32px;height:24px;background:#fff;"></div>
<div class="a" style="left:482.5px;top:308.5px;width:32px;height:24px;background:#fff;"></div>
<div class="a" style="left:515.5px;top:308.5px;width:32px;height:24px;background:#fff;"></div>
<div class="a" style="left:548.5px;top:308.5px;width:32px;height:24px;background:#fff;"></div>
<div class="a" style="left:449.5px;top:333.5px;width:32px;height:24px;background:#fff;"></div>
<div class="a" style="left:482.5px;top:333.5px;width:32px;height:24px;background:#ededed;"></div>
<div class="a" style="left:515.5px;top:333.5px;width:32px;height:24px;background:#fff;"></div>
<div class="a" style="left:548.5px;top:333.5px;width:32px;height:24px;background:#ededed;"></div>
<div class="a" style="left:449.5px;top:358.5px;width:32px;height:24px;background:#ededed;"></div>
<div class="a" style="left:482.5px;top:358.5px;width:32px;height:24px;background:#ededed;"></div>
<div class="a" style="left:515.5px;top:358.5px;width:32px;height:24px;background:#ededed;"></div>
<div class="a" style="left:548.5px;top:358.5px;width:32px;height:24px;background:#ededed;"></div>
<div class="a" style="left:449.5px;top:383.5px;width:32px;height:7px;background:#ededed;"></div>
<div class="a" style="left:482.5px;top:383.5px;width:32px;height:7px;background:#ededed;"></div>
<div class="a" style="left:515.5px;top:383.5px;width:32px;height:7px;background:#ededed;"></div>
<div class="a" style="left:548.5px;top:383.5px;width:32px;height:7px;background:#ededed;"></div>
<div class="a" style="left:449.5px;top:258.5px;width:32.5px;height:24.5px;background:#d6d9ff;border:1px solid #8e8edc"></div>
<div class="a" style="left:482px;top:258.5px;width:0.8px;height:132px;background:#f3f3f3;"></div>
<div class="a" style="left:515px;top:258.5px;width:0.8px;height:132px;background:#f3f3f3;"></div>
<div class="a" style="left:548px;top:258.5px;width:0.8px;height:132px;background:#f3f3f3;"></div>
<div class="a" style="left:449.5px;top:283px;width:132px;height:0.8px;background:#f3f3f3;"></div>
<div class="a" style="left:449.5px;top:308px;width:132px;height:0.8px;background:#f3f3f3;"></div>
<div class="a" style="left:449.5px;top:333px;width:132px;height:0.8px;background:#f3f3f3;"></div>
<div class="a" style="left:449.5px;top:358px;width:132px;height:0.8px;background:#f3f3f3;"></div>
<div class="a" style="left:449.5px;top:383px;width:132px;height:0.8px;background:#f3f3f3;"></div>
<div class="a" style="left:582px;top:258.5px;width:12.5px;height:132px;background:#ededed;"></div>
<div class="a" style="left:583px;top:259px;width:10.8px;height:10px;background:#8e8e8e;border-radius:1px"><div class="a" style="left:2.4px;top:3px;border:3px solid transparent;border-bottom:3px solid #fff;border-top:0"></div></div>
<div class="a" style="left:583px;top:270.5px;width:10.8px;height:94px;background:#999997;border-radius:1px;border-left:1px solid #868686"></div>
<div class="a" style="left:583px;top:379.5px;width:10.8px;height:10px;background:#8e8e8e;border-radius:1px"><div class="a" style="left:2.4px;top:4px;border:3px solid transparent;border-top:3px solid #fff;border-bottom:0"></div></div>
<svg style="left:0;top:0" width="1280" height="720">
<path d="M469.5 281.0L470.7 278.0L478.1 271.0L480.1 272.8L472.5 280.1Z" fill="#8a8a8a" stroke="#555" stroke-width="0.7"/><path d="M469.5 281.0L470.4 279.1L471.5 280.2Z" fill="#111"/>
<path d="M502 280.5L511 272.5" stroke="#888" stroke-width="1.5"/><path d="M503.5 273.5L512 279.5" stroke="#999" stroke-width="1.3"/><circle cx="504" cy="276.5" r="1" fill="#666"/><path d="M501.5 274.5q1-1.6 2.6-0.6" fill="none" stroke="#777" stroke-width="0.7"/>
<path d="M537.5 277.5L544 270.2L545.6 271.6L539 279Z" fill="#111"/><path d="M534 281.5L536.6 277.3L539 279.2Z" fill="#333"/><path d="M536.6 277.4L538.9 279.3" stroke="#ccc" stroke-width="0.8"/><path d="M570.5 277.5L577 270.2L578.6 271.6L572 279Z" fill="#111"/><path d="M567 281.5L569.6 277.3L572 279.2Z" fill="#333"/><path d="M569.6 277.4L571.9 279.3" stroke="#ccc" stroke-width="0.8"/><path d="M576 276.8Q579.4 281.40000000000003 579.2 283.2A3.2 3.2 0 1 1 572.8 283.2Q572.6 281.40000000000003 576 276.8Z" fill="#c9c9c9" stroke="#aaa" stroke-width="0.5"/><circle cx="575.4" cy="283.40000000000003" r="1.3" fill="#f0f0f0"/>
<path d="M469.5 306.0L470.7 303.0L478.1 296.0L480.1 297.8L472.5 305.1Z" fill="#fff" stroke="#444" stroke-width="0.7"/><path d="M469.5 306.0L470.4 304.1L471.5 305.2Z" fill="#111"/>
<path d="M502 301.5L508.5 295L513 298L506.5 305Z" fill="#7d7d7d" stroke="#aaa" stroke-width="0.6"/><path d="M502 301.5L504 300L508.3 303L506.5 305Z" fill="#f2f2f2" stroke="#aaa" stroke-width="0.5"/>
<rect x="535" y="295.5" width="10" height="10" fill="none" stroke="#333" stroke-width="0.8" stroke-dasharray="1.6 1.2"/><path d="M537 304L538 301.5L543.6 296L545 297.4L539.6 303Z" fill="#fff" stroke="#333" stroke-width="0.6"/><path d="M536.5 297.5h3M538 296v3" stroke="#333" stroke-width="0.6"/>
<rect x="568" y="295.5" width="10" height="10" fill="none" stroke="#333" stroke-width="0.8" stroke-dasharray="1.6 1.2"/><path d="M570.5 301L574.8 296.5L578.6 299.5L574.2 304Z" fill="#777" stroke="#333" stroke-width="0.6"/><path d="M569.5 297.5h3M571 296v3" stroke="#333" stroke-width="0.6"/>
<path d="M470.5 327.5L473.5 321.5L479.5 319L482 324L476.5 329.5Z" fill="#8a8a8a" stroke="#bbb" stroke-width="0.6"/><path d="M473.5 321.5L479.5 319L480.6 321.2L475 324Z" fill="#ddd"/><path d="M469 329.5Q468.5 326 471.5 325.5L472.5 329.5Z" fill="#777"/>
<path d="M507.5 321h2.6v2.6h-2.6zM505 323.6h2.5v2.6h-2.5zM510 323.6h2.4v2.6H510zM502.5 326.2h2.5v2.8h-2.5zM507.5 326.2h2.5v2.8h-2.5z" fill="#111"/><path d="M510.5 327h2v2h-2z" fill="#111"/>
<defs><linearGradient id="gr1"><stop offset="0" stop-color="#0a0a0a"/><stop offset="1" stop-color="#f4f4f4"/></linearGradient></defs><rect x="533.5" y="321.5" width="12" height="8" fill="url(#gr1)" stroke="#555" stroke-width="0.7"/>
<path d="M570.5 327.0L577 319.7L578.6 321.1L572 328.5Z" fill="#111"/><path d="M567 331.0L569.6 326.8L572 328.7Z" fill="#333"/><path d="M569.6 326.9L571.9 328.8" stroke="#ccc" stroke-width="0.8"/><path d="M576 326.6Q579.4 331.20000000000005 579.2 333.0A3.2 3.2 0 1 1 572.8 333.0Q572.6 331.20000000000005 576 326.6Z" fill="#c9c9c9" stroke="#aaa" stroke-width="0.5"/><circle cx="575.4" cy="333.20000000000005" r="1.3" fill="#f0f0f0"/>
<path d="M472.5 352.5L479 345.2L480.6 346.6L474 354Z" fill="#111"/><path d="M469 356.5L471.6 352.3L474 354.2Z" fill="#333"/><path d="M471.6 352.4L473.9 354.3" stroke="#ccc" stroke-width="0.8"/><path d="M540 345.5Q543.91 350.79 543.68 352.86A3.6799999999999997 3.6799999999999997 0 1 1 536.32 352.86Q536.09 350.79 540 345.5Z" fill="#c9c9c9" stroke="#aaa" stroke-width="0.5"/><circle cx="539.31" cy="353.09" r="1.4949999999999999" fill="#f0f0f0"/>
</svg>
<div class="a" style="left:515px;top:392.3px;width:12px;height:2px;background:#7a7a7a;border-radius:1px"></div>
<div class="a" style="left:448px;top:397.4px;width:146.7px;height:39px;background:#fff;border:1px solid #e0e0e0;border-radius:2px;overflow:hidden"><div class="a" style="left:0.5px;top:0.5px;width:146px;height:38px;background-image:conic-gradient(#f2f2f2 25%,#fff 0 50%,#f2f2f2 0 75%,#fff 0);background-size:23.6px 23.6px;background-position:0.5px 0.8px"></div></div>
<svg style="left:0;top:0" width="1280" height="720"><path d="M471 419.5Q476 418.6 486 416.2Q500 411.5 512 411.2Q524 411 536 413.2Q548 415.4 557 415Q566 414.2 573 413.2Q566 416.4 556 419.2Q544 422.4 530 421.8Q516 421 504 418.6Q492 416.8 471 419.5Z" fill="#141414" stroke="#141414" stroke-width="0.8" stroke-linejoin="round"/></svg>
<div class="combo" style="left:450px;top:440px;width:71.3px;height:12.6px;"></div>
<div class="dd" style="left:509px;top:441.2px;width:10.8px;height:10.2px;"></div>
<div class="a" style="left:524.4px;top:440px;width:68.4px;height:12.6px;background:#fff;border:1px solid #c8c8c8;border-radius:2px;box-shadow:0 0 0 1px #eee"></div>
<div class="a" style="left:565.5px;top:440.5px;width:12.8px;height:11.8px;background:#dcdcff;border:1px solid #9a9ae0"></div>
<svg style="left:0;top:0" width="1280" height="720" fill="#0a0a0a"><path d="M527.5 450L532 443L536.5 450Z"/><path d="M540.5 450Q541.5 443.5 545.5 443.5Q549.5 443.5 550.5 450Z"/><path d="M554 450V447Q554 443.4 558.5 443.4Q563 443.4 563 447V450Z"/><rect x="567.6" y="443.6" width="8.8" height="6.4"/><rect x="580.5" y="443.6" width="9.5" height="6.4"/></svg>
<div class="a" style="left:505px;top:462px;border:3.5px solid transparent;border-top:4px solid #222;border-bottom:0"></div>
<div class="fld" style="left:516.6px;top:458.5px;width:76px;height:11px;"><div class="a" style="left:1px;top:1px;width:6.5px;height:7px;background:#d4d4d4"></div></div>
<div class="a" style="left:503px;top:471.5px;width:10.5px;height:10.5px;background:#fbfbfb;border:1px solid #d4d4d4;border-radius:1px"><svg style="left:1px;top:1px" width="7" height="7" viewBox="0 0 7 7"><path d="M0.5 6.5L3.5 0.5L4.5 3.5" fill="none" stroke="#777" stroke-width="0.7"/><rect x="4" y="3.6" width="2.8" height="3" fill="#444"/></svg></div>
<div class="fld" style="left:517px;top:471.5px;width:60.5px;height:10.5px;"><div class="a" style="left:1.5px;top:1.2px;width:6.2px;height:6px;background:#c8c8c8"></div></div>
<div class="a" style="left:517px;top:486.8px;width:75.5px;height:10px;background:#cdcdcd;border:1px solid #dadada;border-radius:2px;background-image:conic-gradient(#d6d6d6 25%,#c8c8c8 0 50%,#d6d6d6 0 75%,#c8c8c8 0);background-size:8px 8px"></div>
<div class="a" style="left:503px;top:500px;width:10.5px;height:10.5px;background:#fff;border:1px solid #cfcfcf;border-radius:1px"></div>
<div class="fldd" style="left:517px;top:500px;width:60.5px;height:10.5px;"></div>
<div class="a" style="left:448px;top:515px;width:146px;height:1px;background:#e4e4e4;"></div>
<div class="a" style="left:449px;top:520.5px;border:4px solid transparent;border-left:4.5px solid #7c3c22;border-right:0"></div>
<div class="combo" style="left:456.6px;top:518.5px;width:85.4px;height:12.6px;"></div>
<div class="dd" style="left:531px;top:519.6px;width:10.4px;height:10.4px;"></div>
<div class="a" style="left:449px;top:539.5px;border:4px solid transparent;border-left:4.5px solid #7c3c22;border-right:0"></div>
<div class="combo" style="left:456.6px;top:537.5px;width:85.4px;height:12.6px;"></div>
<div class="dd" style="left:531px;top:538.6px;width:10.4px;height:10.4px;"></div>
<div class="a" style="left:448px;top:534.6px;width:146px;height:1px;background:#e4e4e4;"></div>
<div class="fld" style="left:546px;top:519px;width:46.6px;height:12px;"><div class="a" style="left:1px;top:1px;width:25px;height:8px;background:#c2c2c2"></div></div>
<div class="fld" style="left:546px;top:538px;width:46.6px;height:12px;"><div class="a" style="left:1px;top:1px;width:21.5px;height:8px;background:#c2c2c2"></div></div>
<div class="a" style="left:448px;top:553.4px;width:146px;height:1px;background:#e4e4e4;"></div>
<div class="a" style="left:448px;top:556px;width:147px;height:119px;background:#fff;border:1px solid #dcdcdc;border-radius:2px"></div>
<div class="a" style="left:475.4px;top:556.5px;width:1px;height:117.5px;background:#e6e6e6;"></div>
<div class="a" style="left:502px;top:556.5px;width:1px;height:117.5px;background:#e6e6e6;"></div>
<div class="a" style="left:528.6px;top:556.5px;width:1px;height:117.5px;background:#e6e6e6;"></div>
<div class="a" style="left:555.3px;top:556.5px;width:1px;height:117.5px;background:#e6e6e6;"></div>
<div class="a" style="left:581.8px;top:556.5px;width:1px;height:117.5px;background:#e6e6e6;"></div>
<div class="a" style="left:449px;top:574.3px;width:133px;height:1px;background:#e6e6e6;"></div>
<div class="a" style="left:449px;top:600px;width:133px;height:1px;background:#e6e6e6;"></div>
<div class="a" style="left:449px;top:625.6px;width:133px;height:1px;background:#e6e6e6;"></div>
<div class="a" style="left:449px;top:651.2px;width:133px;height:1px;background:#e6e6e6;"></div>
<div class="a" style="left:502.3px;top:600.3px;width:26.8px;height:25.8px;background:#dcdcff;border:1px solid #9a9ae0"></div>
<div class="a" style="left:582.8px;top:556.5px;width:11.5px;height:117.5px;background:#ededed;"></div>
<div class="a" style="left:583.3px;top:582px;width:10.2px;height:40px;background:#999997;border-radius:1px;border-left:1px solid #868686"></div>
<div class="a" style="left:583.3px;top:663px;width:10.2px;height:10.5px;background:#8e8e8e;border-radius:1px"><div class="a" style="left:2.1px;top:4px;border:3px solid transparent;border-top:3px solid #fff;border-bottom:0"></div></div>
<div class="a" style="left:448px;top:556.5px;width:134px;height:117.4px;overflow:hidden"><svg style="left:-448px;top:-556.5px" width="1280" height="720">
<circle cx="462.5" cy="558.6" r="0.9" fill="#050505"/><text x="462.5" y="572.3" font-size="8.5" fill="#3a3a3a" text-anchor="middle" textLength="10.5" lengthAdjust="spacingAndGlyphs">2.3</text><circle cx="488.8" cy="558.6" r="1" fill="#050505"/><text x="488.8" y="572.3" font-size="8.5" fill="#3a3a3a" text-anchor="middle" textLength="10.5" lengthAdjust="spacingAndGlyphs">2.6</text><circle cx="515.4" cy="558.6" r="1.1" fill="#050505"/><text x="515.4" y="572.3" font-size="8.5" fill="#3a3a3a" text-anchor="middle" textLength="4.4" lengthAdjust="spacingAndGlyphs">3</text><circle cx="542" cy="558.6" r="1.2" fill="#050505"/><text x="542" y="572.3" font-size="8.5" fill="#3a3a3a" text-anchor="middle" textLength="10.5" lengthAdjust="spacingAndGlyphs">3.5</text><circle cx="568.6" cy="558.6" r="1.3" fill="#050505"/><text x="568.6" y="572.3" font-size="8.5" fill="#3a3a3a" text-anchor="middle" textLength="4.4" lengthAdjust="spacingAndGlyphs">4</text>
<circle cx="462.5" cy="584" r="1.8" fill="#050505"/><text x="462.5" y="598" font-size="8.5" fill="#3a3a3a" text-anchor="middle" textLength="4.4" lengthAdjust="spacingAndGlyphs">5</text><circle cx="488.8" cy="584" r="2.1" fill="#050505"/><text x="488.8" y="598" font-size="8.5" fill="#3a3a3a" text-anchor="middle" textLength="4.4" lengthAdjust="spacingAndGlyphs">6</text><circle cx="515.4" cy="584" r="2.5" fill="#050505"/><text x="515.4" y="598" font-size="8.5" fill="#3a3a3a" text-anchor="middle" textLength="4.4" lengthAdjust="spacingAndGlyphs">7</text><circle cx="542" cy="584" r="3" fill="#050505"/><text x="542" y="598" font-size="8.5" fill="#3a3a3a" text-anchor="middle" textLength="4.4" lengthAdjust="spacingAndGlyphs">8</text><circle cx="568.6" cy="584" r="3.3" fill="#050505"/><text x="568.6" y="598" font-size="8.5" fill="#3a3a3a" text-anchor="middle" textLength="4.4" lengthAdjust="spacingAndGlyphs">9</text>
<circle cx="462.5" cy="609.7" r="3.6" fill="#050505"/><text x="462.5" y="624" font-size="8.5" fill="#3a3a3a" text-anchor="middle" textLength="8.8" lengthAdjust="spacingAndGlyphs">10</text><circle cx="488.8" cy="609.7" r="4.3" fill="#050505"/><text x="488.8" y="624" font-size="8.5" fill="#3a3a3a" text-anchor="middle" textLength="8.8" lengthAdjust="spacingAndGlyphs">12</text><circle cx="515.4" cy="609.7" r="5" fill="#050505"/><text x="515.4" y="624" font-size="8.5" fill="#3a3a3a" text-anchor="middle" textLength="8.8" lengthAdjust="spacingAndGlyphs">14</text><circle cx="542" cy="609.7" r="5.8" fill="#050505"/><text x="542" y="624" font-size="8.5" fill="#3a3a3a" text-anchor="middle" textLength="8.8" lengthAdjust="spacingAndGlyphs">16</text><circle cx="568.6" cy="609.7" r="6.8" fill="#050505"/><text x="568.6" y="624" font-size="8.5" fill="#3a3a3a" text-anchor="middle" textLength="8.8" lengthAdjust="spacingAndGlyphs">20</text>
<circle cx="462.5" cy="635.2" r="7" fill="#050505"/><text x="462.5" y="650" font-size="8.5" fill="#3a3a3a" text-anchor="middle" textLength="8.8" lengthAdjust="spacingAndGlyphs">25</text><circle cx="488.8" cy="635.2" r="7" fill="#050505"/><text x="488.8" y="650" font-size="8.5" fill="#3a3a3a" text-anchor="middle" textLength="8.8" lengthAdjust="spacingAndGlyphs">30</text><circle cx="515.4" cy="635.2" r="7" fill="#050505"/><text x="515.4" y="650" font-size="8.5" fill="#3a3a3a" text-anchor="middle" textLength="8.8" lengthAdjust="spacingAndGlyphs">35</text><circle cx="542" cy="635.2" r="7" fill="#050505"/><text x="542" y="650" font-size="8.5" fill="#3a3a3a" text-anchor="middle" textLength="8.8" lengthAdjust="spacingAndGlyphs">40</text><circle cx="568.6" cy="635.2" r="7" fill="#050505"/><text x="568.6" y="650" font-size="8.5" fill="#3a3a3a" text-anchor="middle" textLength="8.8" lengthAdjust="spacingAndGlyphs">50</text>
<circle cx="462.5" cy="660.8" r="7" fill="#050505"/><text x="462.5" y="675.5" font-size="8.5" fill="#3a3a3a" text-anchor="middle" textLength="8.8" lengthAdjust="spacingAndGlyphs">60</text><circle cx="488.8" cy="660.8" r="7" fill="#050505"/><text x="488.8" y="675.5" font-size="8.5" fill="#3a3a3a" text-anchor="middle" textLength="8.8" lengthAdjust="spacingAndGlyphs">70</text><circle cx="515.4" cy="660.8" r="7" fill="#050505"/><text x="515.4" y="675.5" font-size="8.5" fill="#3a3a3a" text-anchor="middle" textLength="8.8" lengthAdjust="spacingAndGlyphs">80</text><circle cx="542" cy="660.8" r="7" fill="#050505"/><text x="542" y="675.5" font-size="8.5" fill="#3a3a3a" text-anchor="middle" textLength="13.2" lengthAdjust="spacingAndGlyphs">100</text><circle cx="568.6" cy="660.8" r="7" fill="#050505"/><text x="568.6" y="675.5" font-size="8.5" fill="#3a3a3a" text-anchor="middle" textLength="13.2" lengthAdjust="spacingAndGlyphs">120</text>
</svg></div>
<div class="a" style="left:450.5px;top:677.5px;width:13px;height:13px;background:#fbfbfb;border:1px solid #efefef"></div>
<svg style="left:0;top:0" width="1280" height="720"><rect x="453" y="679.5" width="7.6" height="9" fill="#e8e8e8" stroke="#aaa" stroke-width="0.8"/><path d="M453 681.5h7.6M456.3 681.5v7" stroke="#bbb" stroke-width="0.7"/><path d="M555.5 685A3.2 3.2 0 1 0 558.5 680.8H556" fill="none" stroke="#222" stroke-width="1.4"/><path d="M556.8 678.2L553.6 680.8L556.8 683.4Z" fill="#222"/><path d="M555.5 688.4h1.4M557.8 688.4h1.4M560.1 688.4h1.4" stroke="#222" stroke-width="1"/><rect x="581.5" y="682" width="10" height="7" fill="#f4f4f4" stroke="#555" stroke-width="0.8"/><path d="M586.5 678.5v4" stroke="#222" stroke-width="1.8"/><path d="M583.8 682l2.7 3l2.7-3z" fill="#222"/><path d="M583.5 687.4h1.2M585.9 687.4h1.2M588.3 687.4h1.2" stroke="#333" stroke-width="0.8"/></svg>
<div class="a" style="left:597px;top:57px;width:11.5px;height:634px;background:#ededed;"></div>
<div class="a" style="left:597.5px;top:58.5px;width:10.5px;height:10px;background:#8e8e8e;border-radius:1px"><div class="a" style="left:2.2px;top:3px;border:3px solid transparent;border-bottom:3px solid #fff;border-top:0"></div></div>
<div class="a" style="left:597.5px;top:161.7px;width:10.5px;height:517px;background:#999997;border-radius:1px;border-left:1px solid #868686;border-top:1px solid #868686"></div>
<div class="a" style="left:597.5px;top:680.5px;width:10.5px;height:10px;background:#8e8e8e;border-radius:1px"><div class="a" style="left:2.2px;top:4px;border:3px solid transparent;border-top:3px solid #fff;border-bottom:0"></div></div>
<svg style="left:0px;top:0px" width="1280" height="720">
<text x="450" y="98.7" font-size="9.5" fill="#333" stroke="none">R</text>
<text x="450" y="115.7" font-size="9.5" fill="#333" stroke="none">G</text>
<text x="450" y="132.29999999999998" font-size="9.5" fill="#333" stroke="none">B</text>
<text x="450" y="154.5" font-size="9.5" fill="#333" stroke="none">H</text>
<text x="450" y="171.29999999999998" font-size="9.5" fill="#333" stroke="none">S</text>
<text x="450" y="188.1" font-size="9.5" fill="#333" stroke="none">V</text>
<text x="576" y="99" font-size="10" fill="#2a2a2a" textLength="15.5" lengthAdjust="spacingAndGlyphs" stroke="#2a2a2a" stroke-width="0.28">013</text>
<text x="576" y="116" font-size="10" fill="#2a2a2a" textLength="15.5" lengthAdjust="spacingAndGlyphs" stroke="#2a2a2a" stroke-width="0.28">013</text>
<text x="576" y="132.6" font-size="10" fill="#2a2a2a" textLength="15.5" lengthAdjust="spacingAndGlyphs" stroke="#2a2a2a" stroke-width="0.28">013</text>
<text x="576" y="154.8" font-size="10" fill="#2a2a2a" textLength="15.5" lengthAdjust="spacingAndGlyphs" stroke="#2a2a2a" stroke-width="0.28">000</text>
<text x="576" y="171.6" font-size="10" fill="#2a2a2a" textLength="15.5" lengthAdjust="spacingAndGlyphs" stroke="#2a2a2a" stroke-width="0.28">000</text>
<text x="576" y="188.4" font-size="10" fill="#2a2a2a" textLength="15.5" lengthAdjust="spacingAndGlyphs" stroke="#2a2a2a" stroke-width="0.28">005</text>
<text x="451.5" y="209.3" font-size="7.5" fill="#26264a" textLength="21" lengthAdjust="spacingAndGlyphs" stroke="#26264a" stroke-width="0.28">引継ぎ</text>
<text x="484" y="209.3" font-size="7.5" fill="#2a2a2a" textLength="14.5" lengthAdjust="spacingAndGlyphs" stroke="#2a2a2a" stroke-width="0.28">基本</text>
<text x="514" y="209.3" font-size="7.5" fill="#2a2a2a" textLength="13.5" lengthAdjust="spacingAndGlyphs" stroke="#2a2a2a" stroke-width="0.28">2 値</text>
<text x="541" y="209.3" font-size="7.5" fill="#2a2a2a" textLength="17.5" lengthAdjust="spacingAndGlyphs" stroke="#2a2a2a" stroke-width="0.28">Ver.1</text>
<text x="568" y="209.3" font-size="7.5" fill="#2a2a2a" textLength="22" lengthAdjust="spacingAndGlyphs" stroke="#2a2a2a" stroke-width="0.28">画材風</text>
<text x="452" y="266.5" font-size="7.2" fill="#26264a" textLength="14" lengthAdjust="spacingAndGlyphs" stroke="#26264a" stroke-width="0.28">鉛筆</text>
<text x="484.5" y="266.5" font-size="7.2" fill="#2a2a2a" textLength="28.5" lengthAdjust="spacingAndGlyphs" stroke="#2a2a2a" stroke-width="0.28">エアブラシ</text>
<text x="517.5" y="266.5" font-size="7.2" fill="#2a2a2a" textLength="7.5" lengthAdjust="spacingAndGlyphs" stroke="#2a2a2a" stroke-width="0.28">筆</text>
<text x="550.5" y="266.5" font-size="7.2" fill="#2a2a2a" textLength="21.5" lengthAdjust="spacingAndGlyphs" stroke="#2a2a2a" stroke-width="0.28">水彩筆</text>
<text x="551" y="276.9" font-size="8" fill="#2a2a2a" stroke="#2a2a2a" stroke-width="0.28">d</text>
<text x="452" y="291.5" font-size="7.2" fill="#2a2a2a" textLength="22" lengthAdjust="spacingAndGlyphs" stroke="#2a2a2a" stroke-width="0.28">マーカー</text>
<text x="485" y="291.5" font-size="7.2" fill="#2a2a2a" textLength="24" lengthAdjust="spacingAndGlyphs" stroke="#2a2a2a" stroke-width="0.28">消しゴム</text>
<text x="517.5" y="291.5" font-size="7.2" fill="#2a2a2a" textLength="25.5" lengthAdjust="spacingAndGlyphs" stroke="#2a2a2a" stroke-width="0.28">選択ペン</text>
<text x="550.5" y="291.5" font-size="7.2" fill="#2a2a2a" textLength="26.5" lengthAdjust="spacingAndGlyphs" stroke="#2a2a2a" stroke-width="0.28">選択消し</text>
<text x="518" y="301.3" font-size="8" fill="#2a2a2a" stroke="#2a2a2a" stroke-width="0.28">q</text>
<text x="551" y="301.3" font-size="8" fill="#2a2a2a" stroke="#2a2a2a" stroke-width="0.28">t</text>
<text x="452" y="316.5" font-size="7.2" fill="#2a2a2a" textLength="16" lengthAdjust="spacingAndGlyphs" stroke="#2a2a2a" stroke-width="0.28">バケツ</text>
<text x="485" y="316.5" font-size="7.2" fill="#2a2a2a" textLength="25" lengthAdjust="spacingAndGlyphs" stroke="#2a2a2a" stroke-width="0.28">二値ペン</text>
<text x="517.5" y="316.5" font-size="7.2" fill="#2a2a2a" textLength="22.5" lengthAdjust="spacingAndGlyphs" stroke="#2a2a2a" stroke-width="0.28">グラデー</text>
<text x="517.5" y="325.6" font-size="7.2" fill="#2a2a2a" textLength="14.5" lengthAdjust="spacingAndGlyphs" stroke="#2a2a2a" stroke-width="0.28">ション</text>
<text x="550.5" y="316.5" font-size="7.2" fill="#2a2a2a" textLength="21.5" lengthAdjust="spacingAndGlyphs" stroke="#2a2a2a" stroke-width="0.28">水彩筆</text>
<text x="452" y="341.5" font-size="7.2" fill="#2a2a2a" textLength="7.5" lengthAdjust="spacingAndGlyphs" stroke="#2a2a2a" stroke-width="0.28">筆</text>
<text x="517.5" y="341.5" font-size="7.2" fill="#2a2a2a" textLength="17.5" lengthAdjust="spacingAndGlyphs" stroke="#2a2a2a" stroke-width="0.28">ぼかし</text>
<text x="453.5" y="450" font-size="9.5" fill="#2a2a2a" textLength="17.5" lengthAdjust="spacingAndGlyphs" stroke="#2a2a2a" stroke-width="0.28">通常</text>
<text x="450" y="467.4" font-size="9.5" fill="#2a2a2a" textLength="40" lengthAdjust="spacingAndGlyphs" stroke="#2a2a2a" stroke-width="0.28">ブラシサイズ</text>
<text x="519" y="467.2" font-size="9.5" fill="#2a2a2a" textLength="18" lengthAdjust="spacingAndGlyphs" stroke="#2a2a2a" stroke-width="0.28">x1.0</text>
<text x="572" y="467.2" font-size="9.5" fill="#2a2a2a" textLength="17.5" lengthAdjust="spacingAndGlyphs" stroke="#2a2a2a" stroke-width="0.28">14.0</text>
<text x="450" y="480.6" font-size="9.5" fill="#2a2a2a" textLength="38" lengthAdjust="spacingAndGlyphs" stroke="#2a2a2a" stroke-width="0.28">最小サイズ</text>
<text x="557" y="480.4" font-size="9.5" fill="#2a2a2a" textLength="18" lengthAdjust="spacingAndGlyphs" stroke="#2a2a2a" stroke-width="0.28">13%</text>
<text x="450" y="495.6" font-size="9.5" fill="#2a2a2a" textLength="36.5" lengthAdjust="spacingAndGlyphs" stroke="#2a2a2a" stroke-width="0.28">ブラシ濃度</text>
<text x="575" y="495.4" font-size="9.5" fill="#2a2a2a" textLength="15" lengthAdjust="spacingAndGlyphs" stroke="#2a2a2a" stroke-width="0.28">100</text>
<text x="450" y="509.2" font-size="9.5" fill="#2a2a2a" textLength="34" lengthAdjust="spacingAndGlyphs" stroke="#2a2a2a" stroke-width="0.28">最小濃度</text>
<text x="561.5" y="509" font-size="9.5" fill="#cfcfcf" textLength="13.5" lengthAdjust="spacingAndGlyphs">0%</text>
<text x="460" y="528.6" font-size="9.5" fill="#2a2a2a" textLength="21" lengthAdjust="spacingAndGlyphs" stroke="#2a2a2a" stroke-width="0.28">にじみ</text>
<text x="549" y="527.8" font-size="6.5" fill="#333" textLength="12" lengthAdjust="spacingAndGlyphs" stroke="#333" stroke-width="0.28">強さ</text>
<text x="580" y="528.6" font-size="9.5" fill="#2a2a2a" textLength="10" lengthAdjust="spacingAndGlyphs" stroke="#2a2a2a" stroke-width="0.28">57</text>
<text x="460" y="547.6" font-size="9.5" fill="#2a2a2a" textLength="34" lengthAdjust="spacingAndGlyphs" stroke="#2a2a2a" stroke-width="0.28">キャンバス</text>
<text x="549" y="546.8" font-size="6.5" fill="#333" textLength="12" lengthAdjust="spacingAndGlyphs" stroke="#333" stroke-width="0.28">強さ</text>
<text x="580" y="547.6" font-size="9.5" fill="#2a2a2a" textLength="10" lengthAdjust="spacingAndGlyphs" stroke="#2a2a2a" stroke-width="0.28">50</text>
</svg>
<!-- ================= MAIN DRAWING ================= -->
<svg style="left:0px;top:0px" width="1280" height="720">
<symbol id="chibi" overflow="visible">
<g fill="none" stroke-linecap="round" stroke-linejoin="round">
<path d="M796.2 228.6C796.4 226.7 796.0 220.9 797.0 216.9C798.0 212.9 799.5 208.3 802.5 204.4C805.5 200.5 809.8 196.4 815.0 193.4C820.2 190.4 826.7 188.2 833.8 186.4C840.8 184.6 849.4 183.5 857.2 182.5C865.0 181.5 872.8 180.9 880.6 180.6C888.4 180.3 896.7 180.1 904.0 180.6C911.3 181.1 917.8 181.7 924.4 183.3C931.0 184.9 936.8 187.4 943.4 190.3C950.0 193.2 957.2 196.8 963.8 200.5C970.3 204.2 976.8 207.9 982.5 212.2C988.2 216.5 993.6 221.8 998.0 226.2C1002.4 230.7 1006.2 235.1 1009.0 238.8C1011.8 242.4 1013.6 246.5 1014.5 248.0M788.4 248.1C789.2 246.0 791.6 238.8 793.0 235.6C794.4 232.3 794.1 231.1 797.0 228.6C799.9 226.1 804.7 223.3 810.3 220.8C815.9 218.3 822.8 215.8 830.6 213.8C838.4 211.7 848.9 209.8 857.2 208.8C865.5 207.7 872.8 207.6 880.6 207.5C888.4 207.4 896.7 207.4 904.0 208.3C911.3 209.2 919.1 211.3 924.4 213.0C929.7 214.7 931.4 215.7 935.6 218.4C939.8 221.1 946.1 226.0 949.7 229.4C953.4 232.8 955.7 236.0 957.5 238.8C959.3 241.5 959.8 244.6 960.3 245.8M796.6 260.9C798.1 260.1 800.5 257.6 805.6 255.9C810.8 254.2 818.9 252.2 827.5 250.5C836.1 248.8 848.4 247.0 857.2 245.8C866.1 244.6 872.8 243.9 880.6 243.4C888.4 242.9 897.5 242.5 904.0 242.7C910.5 242.9 915.2 243.8 919.7 244.7C924.2 245.6 927.8 246.8 931.0 248.0C934.2 249.2 937.5 251.3 938.8 252.0M850.2 225L874.7 223.9M865 216.1L865.5 236.9M762.0 301.0L753.3 307.2L769.7 302.8M769.7 302.8C768.7 305.1 765.2 311.4 763.4 316.9C761.6 322.4 759.8 328.8 758.8 335.6C757.7 342.4 757.4 351.8 757.2 357.5C757.0 363.2 757.2 364.8 757.5 370.0C757.8 375.2 757.5 382.0 758.8 388.8C760.0 395.5 762.5 404.6 765.0 410.6C767.5 416.6 772.2 422.4 773.6 424.7M773.6 424.7L775.2 421.6L786.9 422.3L787.7 415.3L804.0 423.0M788.4 320.0C788.1 321.6 788.5 326.3 786.9 329.4C785.3 332.5 782.3 335.9 779.0 338.8C775.7 341.6 769.9 344.0 767.3 346.6C764.7 349.2 763.9 351.0 763.4 354.4C762.9 357.8 763.2 363.3 764.2 366.9C765.2 370.5 767.7 374.2 769.7 376.2C771.7 378.3 770.5 377.3 776.0 379.4C781.5 381.5 791.6 386.7 802.5 388.8C813.4 390.8 828.6 391.8 841.6 391.9C854.6 392.0 867.6 390.6 880.6 389.5C893.6 388.4 910.8 386.4 919.7 385.6C928.6 384.8 929.3 386.6 934.0 384.8C938.7 383.0 945.7 376.4 948.0 374.7M802.5 263.8C802.0 266.8 800.3 277.8 799.4 282.0C798.5 286.2 797.5 285.1 797.0 288.8C796.5 292.4 796.4 301.1 796.2 303.6M796.2 303.6L833.8 301.2L840.8 283.3L849.4 302.8L896.2 298.9L897.8 284.8L905.6 298.9L944.2 297.8M854.4 360.3C855.4 361.6 858.3 366.6 860.3 368.4C862.3 370.1 864.9 371.3 866.6 370.8C868.3 370.3 869.9 366.2 870.5 365.3M870.5 365.3C871.1 366.4 872.4 370.6 874.4 371.6C876.4 372.7 879.7 373.0 882.2 371.6C884.7 370.2 888.0 364.8 889.2 363.4M951.2 368.0C951.3 370.3 951.9 377.8 952.0 382.0C952.1 386.2 952.2 388.0 952.0 393.4C951.8 398.8 950.8 411.0 950.5 414.5M950.5 414.5L961.4 395.8L966.0 417.7M988.0 303.6C988.4 308.4 990.0 323.5 990.3 332.5C990.5 341.5 989.9 349.6 989.5 357.5C989.1 365.4 988.6 374.0 988.0 380.0C987.4 386.0 987.0 388.8 985.6 393.4C984.2 398.0 982.7 403.4 979.4 407.5C976.1 411.6 968.2 416.0 966.0 417.7M954.0 270.0C954.5 273.4 955.1 284.1 956.7 290.3C958.3 296.6 960.2 303.1 963.8 307.5C967.3 311.9 973.9 315.9 977.8 316.9C981.7 317.9 985.5 316.0 987.2 313.8C988.9 311.5 987.9 305.3 988.0 303.6M993.4 308.3C993.0 309.7 990.7 312.3 991.0 316.9C991.3 321.4 993.3 329.4 995.0 335.6C996.7 341.9 998.9 350.0 1001.2 354.4C1003.6 358.8 1006.1 361.8 1009.0 362.2C1011.9 362.6 1017.1 357.6 1018.8 356.7M1018.8 356.7C1018.2 358.4 1015.6 364.7 1015.3 366.9C1015.0 369.1 1015.8 367.4 1016.9 370.0C1018.0 372.6 1019.2 379.1 1021.6 382.5C1024.0 385.9 1027.9 389.8 1031.0 390.3C1034.1 390.8 1038.2 387.4 1040.3 385.6C1042.4 383.8 1042.9 380.4 1043.4 379.4M1043.4 370.0L1055.2 381.0M955.6 252.0C957.2 253.4 962.1 257.1 965.3 260.6C968.5 264.1 971.1 268.1 974.7 273.0C978.4 277.9 981.7 282.2 987.2 290.3C992.7 298.4 1000.5 311.4 1007.5 321.6C1014.5 331.8 1023.2 343.2 1029.4 351.2C1035.7 359.3 1040.7 365.0 1045.0 370.0C1049.3 375.0 1053.5 379.2 1055.2 381.0M1018.0 241.9C1018.6 244.8 1020.0 253.3 1021.6 259.0C1023.2 264.7 1026.0 271.8 1027.8 276.2C1029.6 280.7 1029.6 280.1 1032.5 285.6C1035.4 291.1 1040.3 300.7 1045.0 309.0C1049.7 317.3 1055.9 328.3 1060.6 335.6C1065.3 342.9 1068.8 348.1 1073.0 352.8C1077.2 357.5 1081.8 360.9 1085.6 363.8C1089.4 366.6 1094.1 369.0 1095.8 370.0M1095.8 370.0C1095.2 371.6 1095.3 376.0 1092.0 379.4C1088.7 382.8 1081.5 387.4 1076.2 390.3C1071.0 393.2 1065.9 395.7 1060.6 396.6C1055.3 397.5 1046.9 395.9 1044.2 395.8M1006.7 298.1L1023 300.5M1018.75 290.3L1017.7 316.9M1024.4 332.5L1041 332.5M1036.4 323L1036.4 345.8M813.4 398.0C812.8 403.8 810.3 425.5 809.5 432.5C808.7 439.5 808.4 433.3 808.4 440.0C808.4 446.7 808.6 462.2 809.5 472.8C810.4 483.4 812.2 496.3 813.9 503.4C815.5 510.5 816.3 513.5 819.4 515.5C822.5 517.5 828.9 516.8 832.5 515.5C836.1 514.2 838.5 512.3 841.2 507.8C844.0 503.3 847.7 491.8 849.0 488.6L894.9 486.4M894.9 486.4C895.6 489.2 897.2 498.4 899.2 503.4C901.2 508.4 903.8 513.4 906.9 516.6C910.0 519.8 914.5 522.5 917.8 522.7C921.1 522.9 924.0 520.9 926.6 517.7C929.2 514.5 931.4 507.9 933.1 503.4C934.9 498.9 936.4 492.9 937.1 490.8L987.8 496.9M987.8 496.9C988.3 499.1 989.3 506.2 991.1 510.0C992.9 513.8 995.7 517.9 998.8 519.9C1001.9 521.9 1006.1 522.9 1009.7 522.0C1013.3 521.1 1017.5 518.9 1020.6 514.4C1023.7 509.8 1026.3 502.7 1028.3 494.7C1030.3 486.7 1031.6 476.6 1032.7 466.2C1033.8 455.9 1035.1 443.3 1034.8 432.5C1034.5 421.7 1032.3 407.0 1031.0 401.2C1029.7 395.5 1027.7 398.4 1027.0 397.8M828.3 399.0C828.4 402.0 828.1 410.5 829.0 416.9C829.9 423.3 830.9 430.9 833.8 437.2C836.6 443.4 841.0 449.6 846.2 454.4C851.5 459.2 859.3 464.3 865.0 466.0C870.7 467.7 875.4 465.9 880.6 464.5C885.8 463.1 891.0 460.2 896.2 457.5C901.5 454.8 907.7 451.6 911.9 448.0C916.1 444.4 918.6 441.3 921.2 435.6C923.9 429.9 926.3 420.8 927.5 413.8C928.7 406.7 928.2 396.8 928.3 393.4M853.3 395.8Q847 414 851.7 434.8Q872 414 899.4 398.9Q901 418 896.25 437.2Q876 412 853.3 395.8ZM985.6 456.7C984.7 454.8 981.5 449.0 980.2 445.0C978.9 441.0 977.5 437.2 977.8 432.5C978.0 427.8 979.1 420.8 981.7 416.9C984.3 413.0 989.1 410.6 993.4 409.0C997.7 407.4 1002.8 406.4 1007.5 407.5C1012.2 408.6 1018.1 411.7 1021.6 415.3C1025.1 418.9 1027.3 424.4 1028.6 429.4C1029.9 434.3 1030.1 440.6 1029.4 445.0C1028.8 449.4 1026.7 453.3 1024.7 456.0C1022.8 458.7 1018.9 460.5 1017.7 461.4L1020 479.4L998 476.25L995.8 462.2L985.6 456.7"/>
<path class="thin" style="stroke-width:0.6em" d="M782.5 263.0C781.9 265.2 779.8 273.0 779.0 276.2C778.2 279.5 779.0 279.4 777.5 282.5C776.0 285.6 773.7 290.9 769.7 295.0C765.7 299.1 756.0 305.2 753.3 307.2M804.0 423.0C803.0 421.2 799.6 417.2 797.8 412.2C796.0 407.1 793.8 395.9 793.0 392.7M935.6 270.0C937.2 271.6 942.4 275.2 945.0 279.4C947.6 283.6 950.2 292.4 951.2 295.0M948.0 303.6C948.4 309.7 949.9 328.9 950.5 340.3C951.1 351.7 951.4 366.7 951.6 372.0M982.2 256.7L999.7 259.4M992.2 252.8L994.7 276"/>
<path style="stroke-width:1.5em" d="M808.8 316.1C811.4 315.5 818.1 312.2 824.4 312.2C830.6 312.2 842.6 315.5 846.2 316.1M901.0 314.5C903.6 313.9 910.1 310.5 916.6 310.6C923.1 310.7 936.1 314.5 940.0 315.3"/>
</g>
<ellipse cx="826.3" cy="333" rx="18.6" ry="17.8" fill="#0c0c0c"/><ellipse cx="918" cy="332.6" rx="18.4" ry="17.8" fill="#0c0c0c"/>
<ellipse cx="825.2" cy="319.8" rx="4.6" ry="2.2" fill="#fff"/><ellipse cx="914.2" cy="320.6" rx="2.8" ry="2.6" fill="#fff"/>
<ellipse cx="991.9" cy="435.6" rx="8.6" ry="11" transform="rotate(-22 991.9 435.6)" fill="#101010"/><ellipse cx="1018" cy="431.2" rx="7.6" ry="10.2" transform="rotate(-28 1018 431.2)" fill="#101010"/>
</symbol>
<use href="#chibi" stroke="#0c0c0c" stroke-width="2.9" style="font-size:2.5px"/>
<path d="M909.6 452.6L909.6 460.2L911.6 458.4L913 461.4L914.2 460.8L912.8 458L915.4 458Z" fill="#fff" stroke="#777" stroke-width="0.7"/>
</svg>
<!-- ================= VIDEO PLAYER ================= -->
<div class="a" style="left:0px;top:25px;width:310px;height:243px;background:#0a0a0a;"></div>
<svg style="left:0;top:28px" width="310" height="183.5" viewBox="0 28 310 183.5" preserveAspectRatio="none">
<defs><linearGradient id="sky" x1="0" y1="0" x2="0" y2="1"><stop offset="0" stop-color="#acd9f7"/><stop offset="1" stop-color="#bfe3f8"/></linearGradient><linearGradient id="grass" x1="0" y1="0" x2="0" y2="1"><stop offset="0" stop-color="#8ed03a"/><stop offset="0.5" stop-color="#86c62a"/><stop offset="1" stop-color="#96c41e"/></linearGradient></defs>
<rect x="0" y="28" width="310" height="140" fill="url(#sky)"/>
<g fill="#d9ecfb"><path d="M-4 30Q20 27 50 31Q78 36 80 43Q78 50 55 50Q40 58 18 55Q0 55 -4 50Z"/><path d="M143 58Q150 50 170 50Q185 45 200 51Q220 55 221 61Q218 68 200 69L160 69Q144 66 143 58Z"/><ellipse cx="71" cy="81.5" rx="20.5" ry="4.8"/><path d="M262 39Q270 33 290 34Q306 34 309 38V45Q290 47 275 45Q263 44 262 39Z"/><path d="M296 90Q297 83 309 81V97Q298 96 296 90Z"/></g>
<g fill="#48a838"><path d="M-2 148Q4 142 10 146Q16 143 20 149Q26 148 28 154V166H-2Z"/><path d="M186 158Q190 152 196 155Q200 151 205 156L206 166H186Z"/><path d="M268 160Q272 151 279 154Q283 148 290 152Q296 147 302 151Q306 149 309 151V168H268Z"/><path d="M100 160h10v6h-10z"/></g>
<rect x="0" y="161" width="310" height="51" fill="url(#grass)"/>
<path d="M0 161Q30 158 60 160.5T140 160T230 160.5T310 160V164H0Z" fill="#8ed03a"/>
<g fill="#c6e88c" opacity="0.85"><rect x="12" y="171" width="2.4" height="4.2" rx="1.1"/><rect x="14" y="187" width="2.4" height="4.2" rx="1.1"/><rect x="8" y="198" width="2.4" height="4.2" rx="1.1"/><rect x="37" y="202" width="2.4" height="4.2" rx="1.1"/><rect x="64" y="199" width="2.4" height="4.2" rx="1.1"/><rect x="92" y="203" width="2.4" height="4.2" rx="1.1"/><rect x="112" y="200" width="2.4" height="4.2" rx="1.1"/><rect x="127" y="185" width="2.4" height="4.2" rx="1.1"/><rect x="158" y="203" width="2.4" height="4.2" rx="1.1"/><rect x="179" y="199" width="2.4" height="4.2" rx="1.1"/><rect x="193" y="204" width="2.4" height="4.2" rx="1.1"/><rect x="221" y="203" width="2.4" height="4.2" rx="1.1"/><rect x="236" y="198" width="2.4" height="4.2" rx="1.1"/><rect x="262" y="203" width="2.4" height="4.2" rx="1.1"/><rect x="283" y="199" width="2.4" height="4.2" rx="1.1"/><rect x="298" y="190" width="2.4" height="4.2" rx="1.1"/><rect x="302" y="203" width="2.4" height="4.2" rx="1.1"/><rect x="206" y="178" width="2.4" height="4.2" rx="1.1"/><rect x="117" y="166" width="2.4" height="4.2" rx="1.1"/></g>
<symbol id="nun" overflow="visible">
<path d="M73 178Q86 175 100 178Q110 181 112 186Q111 190 100 190L74 189.5Z" fill="#aa9c98"/><path d="M104 179.5Q111 182 112 186Q111 190 105 190Q107 185 104 179.5Z" fill="#6a5b5c"/><path d="M37 111Q42 102.5 58 101.5Q78 101.5 90 111Q98 120 101.5 136Q103.6 148 103.6 156Q104 166 102 176L84 176L80 150L81 118Q62 104 37 111Z" fill="#4b3a45"/><path d="M88 118Q97 132 99 148Q100 160 99 172L102 176Q104 166 103.6 156Q103.6 148 101.5 136Q98 120 90 111Z" fill="#3e303b"/><path d="M84.8 133Q91 139 94 146Q97 150 101.4 153L100 159L86 158Q87 146 84.8 133Z" fill="#a8968f"/><path d="M78 160Q90 156 100 161Q104 166 103.5 174L100 178L78 178Z" fill="#4b3a45"/><path d="M76 174Q88 171.5 103 175.5L102 181Q88 178 76 181Z" fill="#bcaca4"/><ellipse cx="91.6" cy="162" rx="6.6" ry="6.2" fill="#cbc3c6"/><rect x="89" y="166.5" width="6.5" height="4.6" rx="1.6" fill="#cbc3c6"/><ellipse cx="89.8" cy="161.6" rx="1.9" ry="2.5" fill="#5a4a56"/><ellipse cx="95" cy="160.6" rx="1.6" ry="2.2" fill="#5a4a56"/><path d="M24.6 148Q25 168 31 182Q35 189 42 188L66 187L66 160L30 156Z" fill="#cdc4ba"/><path d="M36 160L48 158L48 187L42 188Q37 176 36 160Z" fill="#bdb2a8"/><path d="M46.5 155.5Q58 152 74 155.5L74.5 184L66.2 184L65.8 166L54 166L53.8 184L47.2 184Z" fill="#3b394f"/><path d="M53.8 157L66 157L66 167L53.8 167Z" fill="#7d5d4c"/><path d="M56.5 159L63.5 159L60 164.5Z" fill="#d08c58"/><path d="M46.4 183.8H54.4V188.2Q50 189.8 46 188.2Z" fill="#f4efea"/><path d="M65.6 183.8H75V188.2Q70 189.8 65.2 188.2Z" fill="#f4efea"/><path d="M32 113.4Q30 112.4 33 111.6Q44 105.6 58 106.2Q72 107 81 115.6Q84.4 124 84.6 140Q84.6 152 83.6 159.4L78.6 159Q76 155 74.6 150L54 156L34 161.4Q29.6 160 27 156Q24 148 23.9 138.8Q24.4 124 32 113.4Z" fill="#e8e1d7"/><path d="M31 128Q50 124 73 128.6Q75 140 73.4 149Q66 154.6 52 154.6Q36 154 28.6 147Q26 138 31 128Z" fill="#fdf6f1"/><path d="M37 118Q54 112 77 120L75 131.6L70.4 131L70 127.6L66.6 130.6L60 129.6L58.6 126L56 129.4L49.6 129L48 125.4L45.4 129L39 128.6L35 131Z" fill="#b6a99e"/><path d="M33 114Q29.6 122 33 131.6L39.6 128L40.6 118ZM72.6 119.6L80.4 121Q83.6 140 82 158.6L77.6 157Q78 138 72.6 119.6Z" fill="#eee8df"/><path d="M41 110.4Q52 104.6 66 107.2Q76 109.6 81.6 116.6" fill="none" stroke="#f5f1eb" stroke-width="2.9" stroke-linecap="round"/><circle cx="57" cy="106.4" r="1.1" fill="#8a6a58"/><ellipse cx="35.4" cy="140.4" rx="7.4" ry="6.2" fill="#f6aaa2"/><ellipse cx="68.6" cy="146.6" rx="5" ry="5" fill="#f6aaa2"/></symbol>
<use href="#nun"/><ellipse cx="45.8" cy="134.6" rx="3.2" ry="4.9" fill="#c07a38"/><ellipse cx="63.6" cy="136.2" rx="3.8" ry="5.2" fill="#c07a38"/><ellipse cx="45.8" cy="136.4" rx="2" ry="2.6" fill="#f0c48a"/><ellipse cx="63.6" cy="138.2" rx="2.4" ry="2.8" fill="#f0c48a"/><path d="M41.6 130.8Q45 128.8 49.8 130.8M58.6 131.6Q63 129.6 68 132.6" fill="none" stroke="#5a3a2a" stroke-width="1.1"/><path d="M51.6 143.4Q55.6 142 59.4 143.8Q58.4 148.6 55 148.4Q52 147.6 51.6 143.4Z" fill="#f07e80"/>
<use href="#nun" x="82.5" y="3.5"/><g transform="translate(8 0)"><ellipse cx="117.6" cy="137" rx="5.2" ry="5" fill="#4a2626"/><ellipse cx="136.6" cy="139.2" rx="5" ry="5" fill="#4a2626"/><circle cx="116" cy="135" r="1.8" fill="#fff"/><circle cx="135" cy="137.2" r="1.7" fill="#fff"/><circle cx="112" cy="138.6" r="1.5" fill="#f4faff"/><circle cx="141" cy="143.8" r="1.5" fill="#f4faff"/><path d="M124.4 145.4Q128.4 143.2 131 146.4Q131.2 153 127.6 153Q124.4 152 124.4 145.4Z" fill="#e4504e"/><path d="M125.8 150.4Q127.6 149.2 129.4 151Q127.8 153.2 125.8 150.4Z" fill="#f6a0a0"/></g>
<use href="#nun" x="175.5" y="4.8"/><g transform="translate(101 2.2)"><ellipse cx="117.6" cy="137" rx="5.2" ry="5" fill="#4a2626"/><ellipse cx="136.6" cy="139.2" rx="5" ry="5" fill="#4a2626"/><circle cx="116" cy="135" r="1.8" fill="#fff"/><circle cx="135" cy="137.2" r="1.7" fill="#fff"/><circle cx="112" cy="138.6" r="1.5" fill="#f4faff"/><circle cx="141" cy="143.8" r="1.5" fill="#f4faff"/><path d="M124.4 145.4Q128.4 143.2 131 146.4Q131.2 153 127.6 153Q124.4 152 124.4 145.4Z" fill="#e4504e"/><path d="M125.8 150.4Q127.6 149.2 129.4 151Q127.8 153.2 125.8 150.4Z" fill="#f6a0a0"/></g>
</svg>
<div class="a" style="left:0px;top:211.5px;width:310px;height:15.5px;background:linear-gradient(#141618,#24272b);"></div>
<div class="a" style="left:0px;top:213px;width:171px;height:13.5px;background:linear-gradient(#565b61,#3c4046);"></div>
<div class="a" style="left:168px;top:213px;width:4px;height:13.5px;background:linear-gradient(#c8ccd0,#9a9ea3);"></div>
<div class="a" style="left:0px;top:227px;width:310px;height:1px;background:#0c0d0e;"></div>
<div class="a" style="left:0px;top:228px;width:310px;height:23px;background:linear-gradient(#33373c,#25282c);"></div>
<div class="a" style="left:0px;top:251px;width:310px;height:1px;background:#0a0b0c;"></div>
<div class="a" style="left:0px;top:252px;width:310px;height:15px;background:linear-gradient(#1d1f22,#2b2e32);"></div>
<div class="a" style="left:0px;top:266.5px;width:310px;height:1.5px;background:#0c0d0e;"></div>
<svg style="left:0;top:0" width="310" height="270" fill="#d4d6d8">
<rect x="-6" y="231.5" width="13.5" height="15.5" rx="2" fill="none" stroke="#b4b6b8" stroke-width="1"/><rect x="0.5" y="235" width="2" height="8.5"/>
<rect x="19.2" y="236" width="7" height="7"/>
<rect x="43.6" y="235.6" width="1.8" height="7.8"/><path d="M51 235.6V243.4L45.4 239.5Z"/>
<rect x="71.8" y="235.6" width="1.8" height="7.8"/><path d="M66.2 235.6V243.4L71.8 239.5Z"/>
<rect x="88.8" y="235.6" width="1.9" height="7.8"/><path d="M92 235.6V243.4L97.4 239.5Z"/>
<path d="M111.6 240.4H119.4L115.5 235.4Z"/><rect x="111.6" y="241.6" width="7.8" height="1.8"/>
<rect x="220.5" y="233.6" width="16.5" height="10.6" rx="2" fill="none" stroke="#c4c6c8" stroke-width="1.1"/>
<path d="M249.4 237H252L255.4 234.2V244L252 241.2H249.4Z"/><path d="M257 236.8Q258.6 239.1 257 241.4M258.8 235Q261.6 239.1 258.8 243.2" fill="none" stroke="#d4d6d8" stroke-width="1"/>
<rect x="272.20" y="241.60" width="1.9" height="1.60" fill="#f0f0f0"/><rect x="275.06" y="240.74" width="1.9" height="2.46" fill="#f0f0f0"/><rect x="277.92" y="239.88" width="1.9" height="3.32" fill="#f0f0f0"/><rect x="280.78" y="239.02" width="1.9" height="4.18" fill="#f0f0f0"/><rect x="283.64" y="238.16" width="1.9" height="5.04" fill="#f0f0f0"/><rect x="286.50" y="237.30" width="1.9" height="5.90" fill="#f0f0f0"/><rect x="289.36" y="236.44" width="1.9" height="6.76" fill="#f0f0f0"/><rect x="292.22" y="235.58" width="1.9" height="7.62" fill="#f0f0f0"/><rect x="295.08" y="234.72" width="1.9" height="8.48" fill="#f0f0f0"/><rect x="297.94" y="233.86" width="1.9" height="9.34" fill="#f0f0f0"/><rect x="300.80" y="233.00" width="1.9" height="10.20" fill="#f0f0f0"/>
<text x="-5" y="222.8" font-size="9" fill="#c9cbcd" textLength="77" lengthAdjust="spacingAndGlyphs" stroke="#c9cbcd" stroke-width="0.28">ﾄﾞｷｽﾋﾟｷｽﾋﾟｯｷｰ.mp4</text>
<text x="168" y="241.4" font-size="6.5" fill="#c4c6c8" textLength="11" lengthAdjust="spacingAndGlyphs" stroke="#c4c6c8" stroke-width="0.28">AUD</text>
<text x="190" y="241.4" font-size="6.5" fill="#575a5e" textLength="11" lengthAdjust="spacingAndGlyphs" stroke="#575a5e" stroke-width="0.28">SUB</text>
<text x="223.2" y="241.6" font-size="6.5" fill="#d0d2d4" font-weight="bold" textLength="11" lengthAdjust="spacingAndGlyphs" stroke="#d0d2d4" stroke-width="0.28">GPU</text>
<text x="-7.5" y="263.6" font-size="9.5" fill="#c9cbcd" textLength="22.5" lengthAdjust="spacingAndGlyphs" stroke="#c9cbcd" stroke-width="0.28">再生中</text>
<text x="256.6" y="263.8" font-size="9" fill="#b9bcc0" textLength="48.4" lengthAdjust="spacingAndGlyphs" stroke="#b9bcc0" stroke-width="0.28">00:03 / 00:05</text>
</svg>
<!-- ================= SUBTITLE ================= -->
<svg style="left:0;top:0" width="1280" height="720" fill="none" stroke-linecap="round" stroke-linejoin="round" role="img" aria-label="むごれじちょわよー">
<g transform="translate(0 566) scale(1 0.83) translate(0 -566.4)">
<path d="M573 560.5H588.5M580.6 553.5V570.5Q580.8 575.5 577.2 575.6Q573.6 575.4 574 571.6Q574.6 568 580.6 568.4M580.6 571.5Q581 579 586.5 579.2Q593 579.4 594 572.5M589.5 555.5Q593.6 558.5 595 563M605 557.5Q611.5 559 618.5 556.6M604.6 569.5Q604 577.6 612 578.4Q618 578.8 622.5 577.6M619.2 553.6L620.8 556.6M623 552.6L624.6 555.6M634.4 552.6V580M629.6 562Q637 558.4 638.6 557.4L630 574.6M636 567.4Q642.6 557.8 646.4 559.4Q648.6 561.4 647.6 569.6Q646.8 578.6 651 578.8Q654.4 578.4 655.6 574.6M664.6 554.6V571.6Q664.8 579.2 670.6 579Q676.6 578.4 680 571.6M673.4 556L675 559.2M677.8 554.6L679.4 557.8M688.6 559H707M697.6 552.8Q695.6 561.6 692.6 569.4Q698.6 564.6 703.6 565.8Q708.2 567.4 707.6 572.2Q706.4 578.6 695.4 579.4M723.4 562V575.6M723.6 567.4H730.4M723.4 575Q720.6 571.4 717.6 572.8Q714.8 574.6 716.6 577.6Q719.6 580.4 723.8 576.4Q727.6 579.2 731.4 579.6M742.6 552.8V580M737.6 562Q745.4 558.4 746.8 557.4L738 574.6M744.2 567.4Q751 559 757 560.4Q763 562.4 762.6 569.6Q761.6 577.6 752.6 579.6M779.6 553V575M779.8 560.6H789.6M779.6 574.4Q775.4 569.6 771.4 571.6Q767.6 574 770.4 577.8Q774.6 581 780 575.6Q785.4 579.4 792 579.6M798.6 566.4Q810 565.4 820.6 565.6" stroke="#505050" stroke-width="10.2" vector-effect="non-scaling-stroke"/>
<path d="M573 560.5H588.5M580.6 553.5V570.5Q580.8 575.5 577.2 575.6Q573.6 575.4 574 571.6Q574.6 568 580.6 568.4M580.6 571.5Q581 579 586.5 579.2Q593 579.4 594 572.5M589.5 555.5Q593.6 558.5 595 563M605 557.5Q611.5 559 618.5 556.6M604.6 569.5Q604 577.6 612 578.4Q618 578.8 622.5 577.6M619.2 553.6L620.8 556.6M623 552.6L624.6 555.6M634.4 552.6V580M629.6 562Q637 558.4 638.6 557.4L630 574.6M636 567.4Q642.6 557.8 646.4 559.4Q648.6 561.4 647.6 569.6Q646.8 578.6 651 578.8Q654.4 578.4 655.6 574.6M664.6 554.6V571.6Q664.8 579.2 670.6 579Q676.6 578.4 680 571.6M673.4 556L675 559.2M677.8 554.6L679.4 557.8M688.6 559H707M697.6 552.8Q695.6 561.6 692.6 569.4Q698.6 564.6 703.6 565.8Q708.2 567.4 707.6 572.2Q706.4 578.6 695.4 579.4M723.4 562V575.6M723.6 567.4H730.4M723.4 575Q720.6 571.4 717.6 572.8Q714.8 574.6 716.6 577.6Q719.6 580.4 723.8 576.4Q727.6 579.2 731.4 579.6M742.6 552.8V580M737.6 562Q745.4 558.4 746.8 557.4L738 574.6M744.2 567.4Q751 559 757 560.4Q763 562.4 762.6 569.6Q761.6 577.6 752.6 579.6M779.6 553V575M779.8 560.6H789.6M779.6 574.4Q775.4 569.6 771.4 571.6Q767.6 574 770.4 577.8Q774.6 581 780 575.6Q785.4 579.4 792 579.6M798.6 566.4Q810 565.4 820.6 565.6" stroke="#ffffff" stroke-width="3.3" vector-effect="non-scaling-stroke"/>
</g>
</svg>
</body>
</html>
